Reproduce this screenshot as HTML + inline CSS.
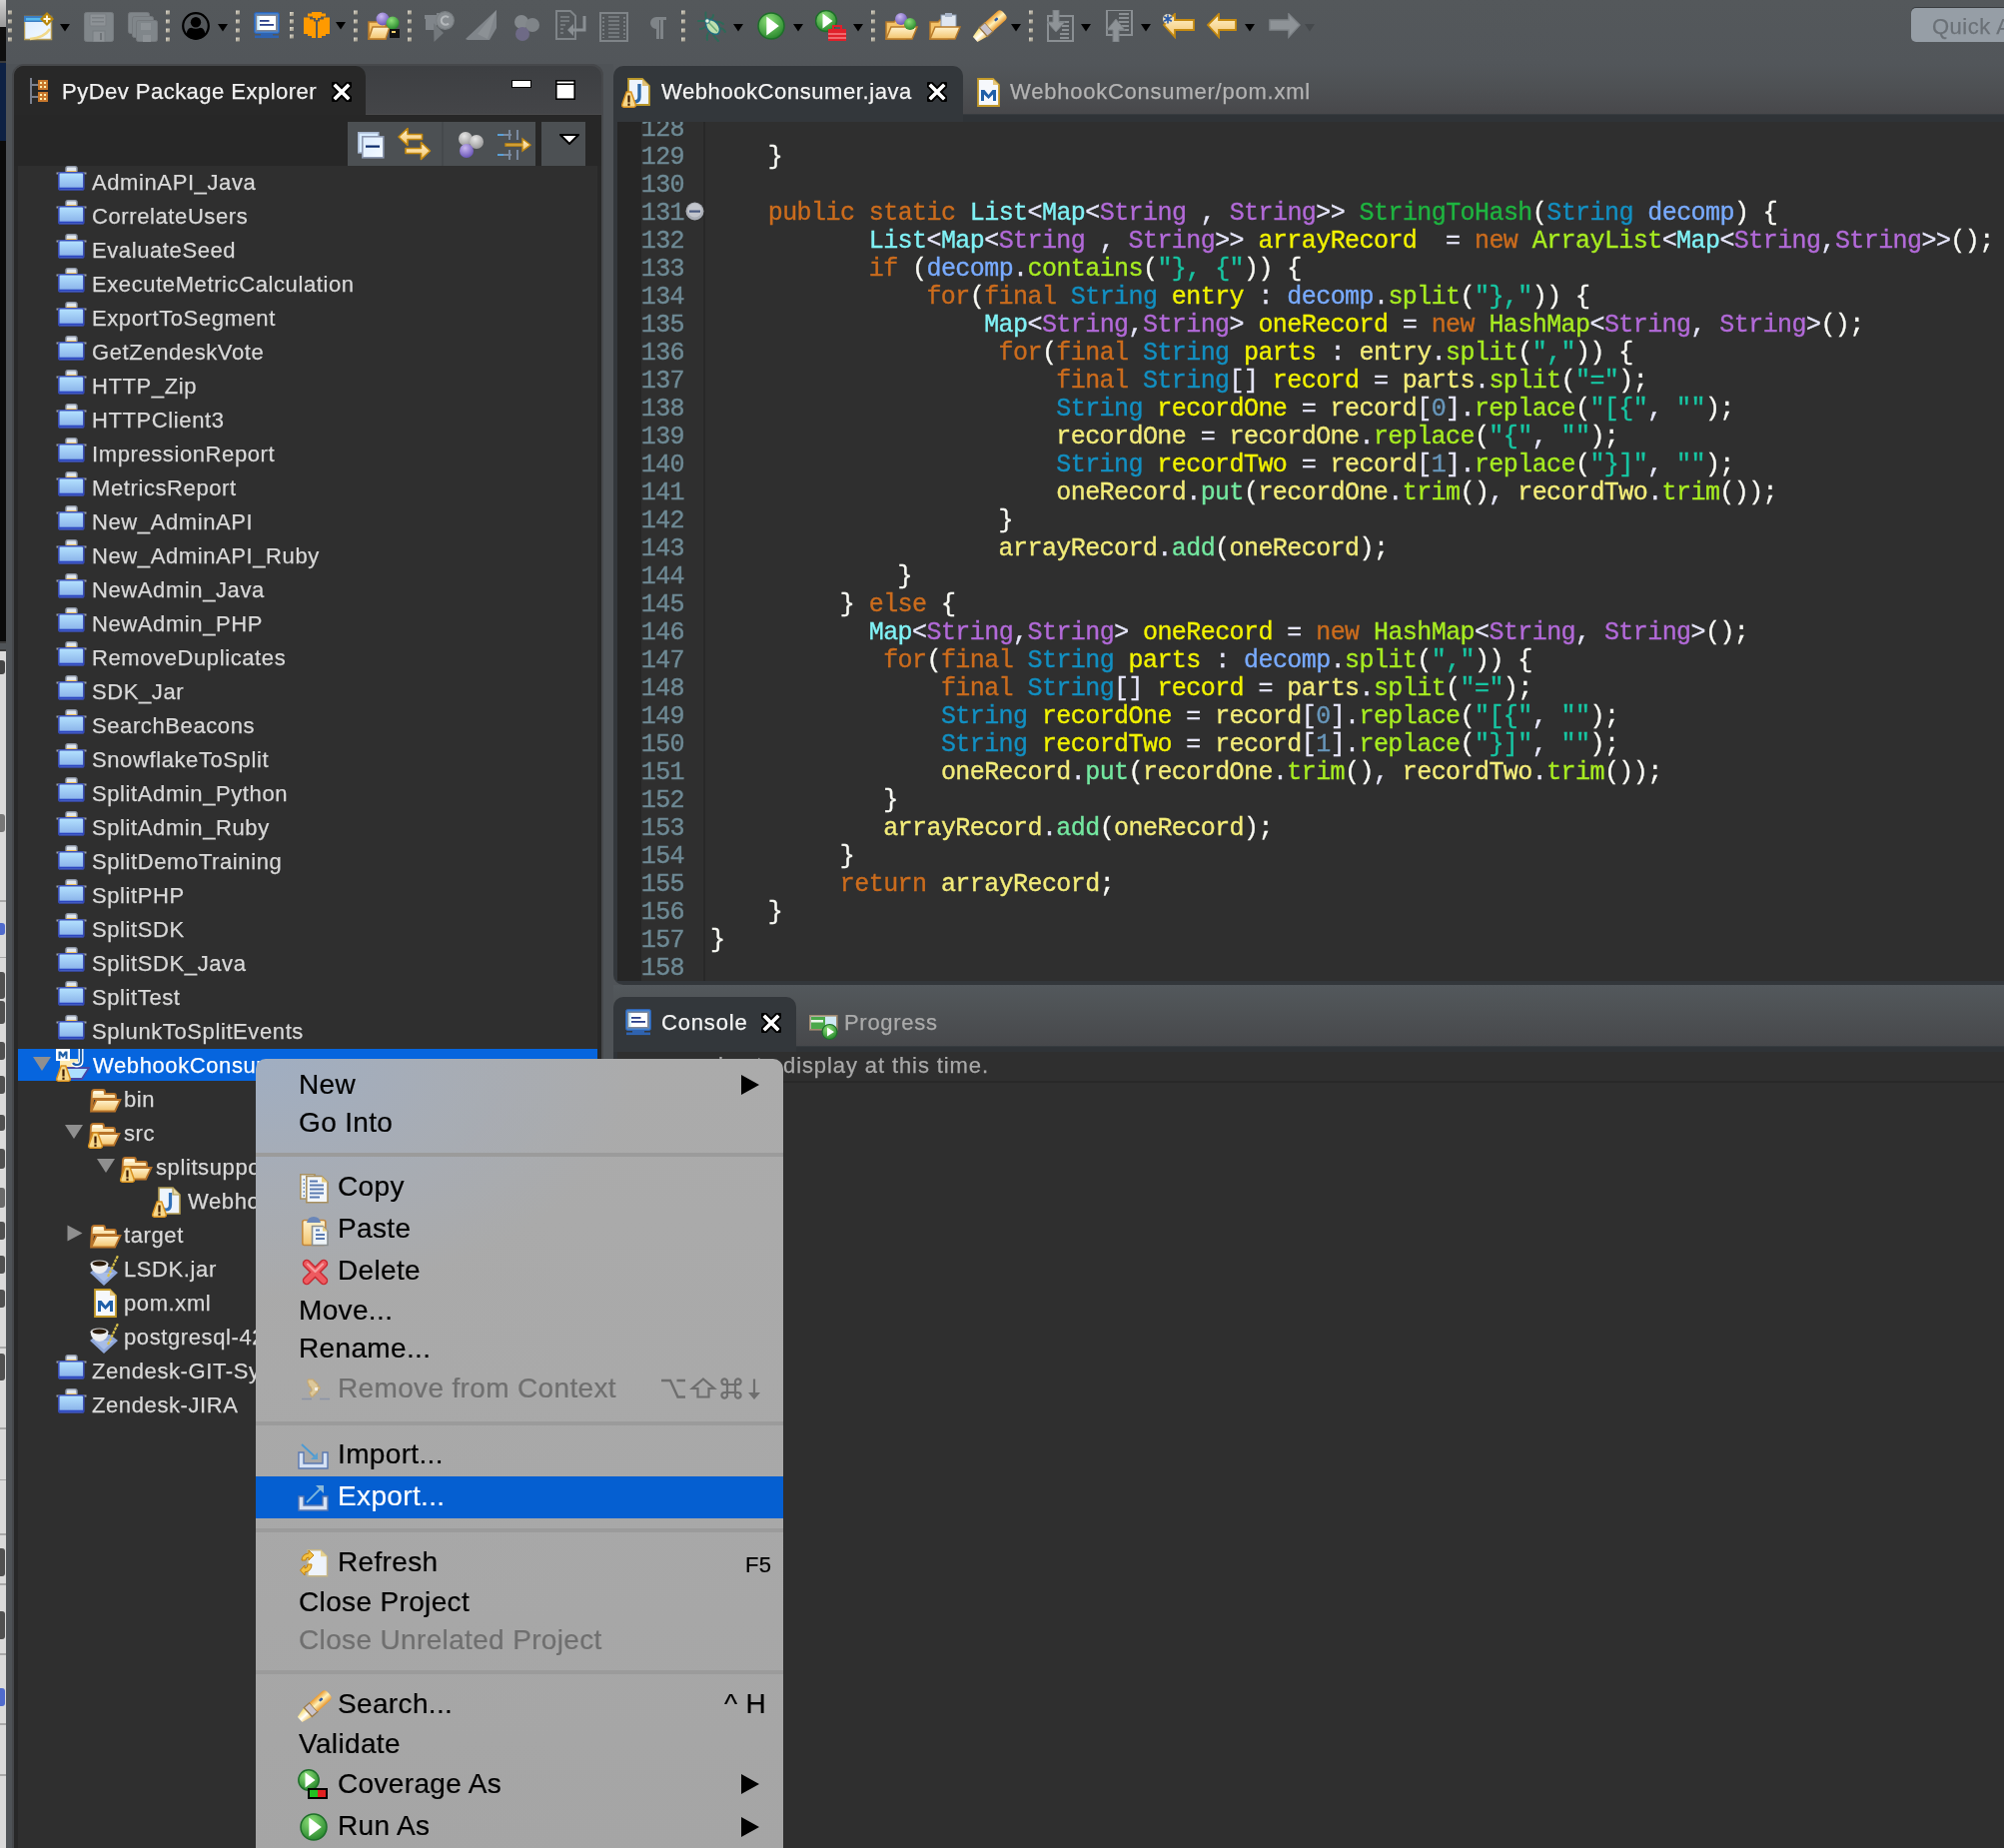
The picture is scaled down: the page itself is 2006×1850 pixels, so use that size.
<!DOCTYPE html><html><head><meta charset="utf-8"><style>
*{margin:0;padding:0;box-sizing:border-box}
html,body{width:2006px;height:1850px;overflow:hidden;background:#505458;position:relative;font-family:"Liberation Sans",sans-serif}
.a{position:absolute}
.t{position:absolute;white-space:pre;font-family:"Liberation Sans",sans-serif;-webkit-text-stroke:0.25px currentColor}
.code{position:absolute;white-space:pre;font-family:"Liberation Mono",monospace;font-size:25px;letter-spacing:-0.57px;line-height:28px;-webkit-text-stroke:0.35px currentColor}
.ln{position:absolute;white-space:pre;font-family:"Liberation Mono",monospace;font-size:25px;letter-spacing:-0.57px;line-height:28px;-webkit-text-stroke:0.35px currentColor;color:#6e8a95;text-align:right}
.kw{color:#cc6c1d}.cl{color:#1290c3}.if{color:#80f2f6}.ta{color:#b36ad9}.md{color:#1eb540}
.pa{color:#79abff}.lv{color:#f3ec79}.ld{color:#f2f200}.me{color:#a7ec21}.am{color:#74e8a0}
.st{color:#17c6a3}.nu{color:#6897bb}.op{color:#e6e6fa}.br{color:#f9faf4}
.tree .r{position:absolute;left:0;height:34px;line-height:34px;font-size:22px;color:#d9d9d9;white-space:pre;letter-spacing:0.3px}
.mi{position:absolute;white-space:pre;font-size:28px;color:#000;line-height:38px;letter-spacing:0.35px;-webkit-text-stroke:0.2px currentColor}
.dis{color:#6f6f6f}
.sep{position:absolute;left:0;width:528px;height:4px;background:#9b9b9b}
</style></head><body><div id="root" style="position:absolute;left:0;top:0;width:2006px;height:1850px;overflow:hidden;will-change:transform">
<div class="a" style="left:0;top:0;width:6px;height:27px;background:linear-gradient(#d0d0d0,#9a9a9a)"></div>
<div class="a" style="left:0;top:27px;width:6px;height:34px;background:#0f0f0f"></div>
<div class="a" style="left:0;top:61px;width:6px;height:2px;background:#3a3a3a"></div>
<div class="a" style="left:0;top:63px;width:6px;height:78px;background:#0d2144"></div>
<div class="a" style="left:0;top:141px;width:6px;height:501px;background:#0b0b0b"></div>
<div class="a" style="left:0;top:642px;width:6px;height:2px;background:#3c3c3c"></div>
<div class="a" style="left:0;top:650px;width:6px;height:2px;background:#3c3c3c"></div>
<div class="a" style="left:0;top:652px;width:6px;height:1198px;background:#dadada"></div>
<div class="a" style="left:0;top:661px;width:5px;height:14px;background:#111;opacity:0.75;border-radius:0 3px 3px 0"></div>
<div class="a" style="left:0;top:815px;width:5px;height:18px;background:#555;opacity:0.75;border-radius:0 3px 3px 0"></div>
<div class="a" style="left:0;top:924px;width:5px;height:12px;background:#2246c8;opacity:0.75;border-radius:0 3px 3px 0"></div>
<div class="a" style="left:0;top:973px;width:5px;height:27px;background:#222;opacity:0.75;border-radius:0 3px 3px 0"></div>
<div class="a" style="left:0;top:1002px;width:5px;height:23px;background:#222;opacity:0.75;border-radius:0 3px 3px 0"></div>
<div class="a" style="left:0;top:1043px;width:5px;height:18px;background:#222;opacity:0.75;border-radius:0 3px 3px 0"></div>
<div class="a" style="left:0;top:1077px;width:5px;height:18px;background:#222;opacity:0.75;border-radius:0 3px 3px 0"></div>
<div class="a" style="left:0;top:1116px;width:5px;height:16px;background:#222;opacity:0.75;border-radius:0 3px 3px 0"></div>
<div class="a" style="left:0;top:1150px;width:5px;height:20px;background:#222;opacity:0.75;border-radius:0 3px 3px 0"></div>
<div class="a" style="left:0;top:1189px;width:5px;height:20px;background:#444;opacity:0.75;border-radius:0 3px 3px 0"></div>
<div class="a" style="left:0;top:1223px;width:5px;height:18px;background:#222;opacity:0.75;border-radius:0 3px 3px 0"></div>
<div class="a" style="left:0;top:1257px;width:5px;height:18px;background:#222;opacity:0.75;border-radius:0 3px 3px 0"></div>
<div class="a" style="left:0;top:1291px;width:5px;height:18px;background:#222;opacity:0.75;border-radius:0 3px 3px 0"></div>
<div class="a" style="left:0;top:1355px;width:5px;height:27px;background:#222;opacity:0.75;border-radius:0 3px 3px 0"></div>
<div class="a" style="left:0;top:1550px;width:5px;height:28px;background:#222;opacity:0.75;border-radius:0 3px 3px 0"></div>
<div class="a" style="left:0;top:1613px;width:5px;height:28px;background:#222;opacity:0.75;border-radius:0 3px 3px 0"></div>
<div class="a" style="left:0;top:1690px;width:5px;height:18px;background:#2246c8;opacity:0.75;border-radius:0 3px 3px 0"></div>
<div class="a" style="left:0;top:901px;width:6px;height:1.5px;background:#a8a8a8"></div>
<div class="a" style="left:0;top:957.5px;width:6px;height:1.5px;background:#a8a8a8"></div>
<div class="a" style="left:0;top:1348px;width:6px;height:1.5px;background:#a8a8a8"></div>
<div class="a" style="left:0;top:1429px;width:6px;height:1.5px;background:#a8a8a8"></div>
<div class="a" style="left:0;top:1480.5px;width:6px;height:1.5px;background:#a8a8a8"></div>
<div class="a" style="left:0;top:1535px;width:6px;height:1.5px;background:#a8a8a8"></div>
<div class="a" style="left:0;top:1585px;width:6px;height:1.5px;background:#a8a8a8"></div>
<div class="a" style="left:0;top:1655px;width:6px;height:1.5px;background:#a8a8a8"></div>
<div class="a" style="left:0;top:1725px;width:6px;height:1.5px;background:#a8a8a8"></div>
<div class="a" style="left:0;top:1776px;width:6px;height:1.5px;background:#a8a8a8"></div>
<div class="a" style="left:6px;top:0;width:2000px;height:1850px;background:#4f5357"></div>
<div class="a" style="left:6px;top:0;width:2000px;height:64px;background:linear-gradient(#54585b,#52565a)"></div>
<div class="a" style="left:614px;top:64px;width:1392px;height:50px;background:linear-gradient(#52565a 0%,#4e5154 45%,#48484b 100%)"></div>
<svg width="0" height="0" style="position:absolute"><defs>
<linearGradient id="gdot" x1="0" y1="0" x2="1" y2="1"><stop offset="0" stop-color="#e4dfd2"/><stop offset="1" stop-color="#8f8a7c"/></linearGradient>
<linearGradient id="gfold" x1="0" y1="0" x2="0" y2="1"><stop offset="0" stop-color="#b5e3ff"/><stop offset="1" stop-color="#86aee8"/></linearGradient>
<linearGradient id="gorange" x1="0" y1="0" x2="0" y2="1"><stop offset="0" stop-color="#fff3cf"/><stop offset="1" stop-color="#f3c46d"/></linearGradient>
<radialGradient id="ggreen" cx="0.4" cy="0.3" r="0.7"><stop offset="0" stop-color="#8ee07a"/><stop offset="1" stop-color="#2a8a2e"/></radialGradient>
<radialGradient id="gpurple" cx="0.4" cy="0.3" r="0.7"><stop offset="0" stop-color="#c9b8f0"/><stop offset="1" stop-color="#6b57b8"/></radialGradient>
<radialGradient id="ggray" cx="0.4" cy="0.3" r="0.7"><stop offset="0" stop-color="#e6e6e6"/><stop offset="1" stop-color="#9a9a9a"/></radialGradient>
<linearGradient id="gpen" x1="0" y1="0" x2="0" y2="1"><stop offset="0" stop-color="#eb9a2c"/><stop offset="0.5" stop-color="#fff3bc"/><stop offset="1" stop-color="#e89830"/></linearGradient>
<linearGradient id="gpentip" x1="0" y1="0" x2="0" y2="1"><stop offset="0" stop-color="#f6d860"/><stop offset="0.55" stop-color="#ffffff"/><stop offset="1" stop-color="#f0c050"/></linearGradient>
<linearGradient id="gwin" x1="0" y1="0" x2="1" y2="1"><stop offset="0" stop-color="#dcecff"/><stop offset="1" stop-color="#f4faff"/></linearGradient>
</defs></svg>
<svg class="a" style="left:8px;top:10px" width="4" height="34" viewBox="0 0 4 34"><rect x="0" y="0.5" width="4" height="4" fill="url(#gdot)"/><rect x="0" y="9.5" width="4" height="4" fill="url(#gdot)"/><rect x="0" y="18.5" width="4" height="4" fill="url(#gdot)"/><rect x="0" y="27.5" width="4" height="4" fill="url(#gdot)"/></svg>
<svg class="a" style="left:166px;top:10px" width="4" height="34" viewBox="0 0 4 34"><rect x="0" y="0.5" width="4" height="4" fill="url(#gdot)"/><rect x="0" y="9.5" width="4" height="4" fill="url(#gdot)"/><rect x="0" y="18.5" width="4" height="4" fill="url(#gdot)"/><rect x="0" y="27.5" width="4" height="4" fill="url(#gdot)"/></svg>
<svg class="a" style="left:236px;top:10px" width="4" height="34" viewBox="0 0 4 34"><rect x="0" y="0.5" width="4" height="4" fill="url(#gdot)"/><rect x="0" y="9.5" width="4" height="4" fill="url(#gdot)"/><rect x="0" y="18.5" width="4" height="4" fill="url(#gdot)"/><rect x="0" y="27.5" width="4" height="4" fill="url(#gdot)"/></svg>
<svg class="a" style="left:354px;top:10px" width="4" height="34" viewBox="0 0 4 34"><rect x="0" y="0.5" width="4" height="4" fill="url(#gdot)"/><rect x="0" y="9.5" width="4" height="4" fill="url(#gdot)"/><rect x="0" y="18.5" width="4" height="4" fill="url(#gdot)"/><rect x="0" y="27.5" width="4" height="4" fill="url(#gdot)"/></svg>
<svg class="a" style="left:408px;top:10px" width="4" height="34" viewBox="0 0 4 34"><rect x="0" y="0.5" width="4" height="4" fill="url(#gdot)"/><rect x="0" y="9.5" width="4" height="4" fill="url(#gdot)"/><rect x="0" y="18.5" width="4" height="4" fill="url(#gdot)"/><rect x="0" y="27.5" width="4" height="4" fill="url(#gdot)"/></svg>
<svg class="a" style="left:682px;top:10px" width="4" height="34" viewBox="0 0 4 34"><rect x="0" y="0.5" width="4" height="4" fill="url(#gdot)"/><rect x="0" y="9.5" width="4" height="4" fill="url(#gdot)"/><rect x="0" y="18.5" width="4" height="4" fill="url(#gdot)"/><rect x="0" y="27.5" width="4" height="4" fill="url(#gdot)"/></svg>
<svg class="a" style="left:872px;top:10px" width="4" height="34" viewBox="0 0 4 34"><rect x="0" y="0.5" width="4" height="4" fill="url(#gdot)"/><rect x="0" y="9.5" width="4" height="4" fill="url(#gdot)"/><rect x="0" y="18.5" width="4" height="4" fill="url(#gdot)"/><rect x="0" y="27.5" width="4" height="4" fill="url(#gdot)"/></svg>
<svg class="a" style="left:1030px;top:10px" width="4" height="34" viewBox="0 0 4 34"><rect x="0" y="0.5" width="4" height="4" fill="url(#gdot)"/><rect x="0" y="9.5" width="4" height="4" fill="url(#gdot)"/><rect x="0" y="18.5" width="4" height="4" fill="url(#gdot)"/><rect x="0" y="27.5" width="4" height="4" fill="url(#gdot)"/></svg>
<svg class="a" style="left:290px;top:10px" width="4" height="34" viewBox="0 0 4 34"><rect x="0" y="2" width="4" height="4" fill="url(#gdot)"/><rect x="0" y="9.5" width="4" height="4" fill="url(#gdot)"/><rect x="0" y="17" width="4" height="4" fill="url(#gdot)"/><rect x="0" y="24.5" width="4" height="4" fill="url(#gdot)"/></svg>
<svg class="a" style="left:24px;top:12px" width="32" height="30" viewBox="0 0 32 30">
<rect x="0.5" y="4.5" width="27" height="23" fill="url(#gwin)" stroke="#b39a55" stroke-width="1.5"/>
<rect x="0" y="4" width="28" height="6" fill="#3c7fc4"/><rect x="2" y="6" width="22" height="2.5" fill="#57b8ec"/>
<path d="M6 27 Q20 26 26 17" stroke="#f1d98a" stroke-width="2.5" fill="none"/>
<path d="M23 7 L30 0 L37 7 L30 14Z" fill="#b8860b" transform="translate(-7,0)"/>
<path d="M23 3.5V10.5M19.5 7H26.5" stroke="#fff6dc" stroke-width="2"/></svg>
<svg class="a" style="left:60px;top:24px" width="10" height="8" viewBox="0 0 10 8"><path d="M0 0H10L5 7.5Z" fill="#000"/></svg>
<svg class="a" style="left:84px;top:12px" width="30" height="30" viewBox="0 0 30 30">
<rect x="0.5" y="0.5" width="29" height="29" rx="2" fill="#80868a" stroke="#767b7f"/>
<rect x="6" y="2" width="16" height="12" rx="1" fill="#8d9296" stroke="#7a7f83"/>
<rect x="8" y="5" width="12" height="1.5" fill="#7a7f83"/><rect x="8" y="9" width="12" height="1.5" fill="#7a7f83"/>
<rect x="9" y="19" width="12" height="11" fill="#8d9296" stroke="#777c80"/><rect x="16" y="21" width="2" height="7" fill="#6f7478"/></svg>
<svg class="a" style="left:128px;top:12px" width="30" height="30" viewBox="0 0 30 30"><rect x="0.5" y="0.5" width="21" height="21" rx="2" fill="#80868a" stroke="#75797d"/><rect x="4.5" y="4.5" width="21" height="21" rx="2" fill="#80868a" stroke="#75797d"/><rect x="8.5" y="8.5" width="21" height="21" rx="2" fill="#80868a" stroke="#75797d"/><rect x="13" y="11" width="10" height="7" fill="#8d9296"/><rect x="15" y="23" width="8" height="7" fill="#8d9296"/></svg>
<svg class="a" style="left:182px;top:12px" width="28" height="28" viewBox="0 0 28 28">
<circle cx="14" cy="14" r="12.8" fill="none" stroke="#000" stroke-width="2.2"/>
<circle cx="14" cy="10.3" r="5.2" fill="#000"/>
<path d="M4.6 23 Q5 16 9.5 15.8 Q14 17.5 18.5 15.8 Q23 16 23.4 23 Q19 27.5 14 27.5 Q9 27.5 4.6 23Z" fill="#000"/></svg>
<svg class="a" style="left:218px;top:24px" width="10" height="8" viewBox="0 0 10 8"><path d="M0 0H10L5 7.5Z" fill="#000"/></svg>
<svg class="a" style="left:254px;top:12px" width="26" height="27" viewBox="0 0 26 27">
<rect x="0.5" y="0.5" width="25" height="21" rx="2" fill="#3f7fd0" stroke="#2f63b0"/>
<rect x="2" y="2.5" width="22" height="17" fill="#7c8698"/>
<rect x="3.5" y="4" width="18.5" height="14" fill="#fff"/><rect x="3.5" y="4" width="2" height="14" fill="#cbeeff"/>
<rect x="6" y="8" width="9.5" height="1.8" fill="#2a3f8a"/><rect x="6" y="12" width="14" height="1.8" fill="#2a3f8a"/>
<rect x="7" y="22" width="12" height="2" fill="#2f63b0"/><rect x="1" y="23.5" width="24" height="2.6" fill="#2f63b0"/></svg>
<svg class="a" style="left:304px;top:12px" width="26" height="27" viewBox="0 0 26 27">
<path d="M8 0H18V1.5H22V4.5H17V6H14V8H12V6H9V4.5H4V1.5H8Z" fill="#ff9a00"/>
<path d="M0 5.5H6V7.5H10V9.5H12V26H8V24H4V22H0Z" fill="#ff9a00"/>
<path d="M26 5.5H20V7.5H16V9.5H14V26H18V24H22V22H26Z" fill="#ff9a00"/></svg>
<svg class="a" style="left:336px;top:22px" width="10" height="8" viewBox="0 0 10 8"><path d="M0 0H10L5 7.5Z" fill="#000"/></svg>
<svg class="a" style="left:368px;top:12px" width="34" height="30" viewBox="0 0 34 30">
<path d="M1 10H9L11 8H18V27H1Z" fill="#f4c36a" stroke="#b87b2a" stroke-width="1.5"/>
<path d="M1 27L5 15H22L18 27Z" fill="url(#gorange)" stroke="#b87b2a" stroke-width="1.5"/>
<circle cx="15" cy="7" r="6.5" fill="url(#gpurple)"/>
<circle cx="25" cy="11" r="6.5" fill="url(#ggreen)"/>
<rect x="22" y="17" width="10" height="9" fill="#111"/><rect x="24" y="19" width="4" height="2" fill="#f0d070"/></svg>
<svg class="a" style="left:424px;top:10px" width="32" height="34" viewBox="0 0 32 34">
<path d="M1 5H13V3H20V9H13V20H2V9H1Z" fill="#80858a"/>
<path d="M10 13L20 23L10.5 32Z" fill="#73787c"/>
<circle cx="21.5" cy="10.5" r="8.8" fill="#888d91" stroke="#7b8084" stroke-width="1.2"/>
<path d="M25 7.5A4.2 4.2 0 1 0 25 13.5" stroke="#b4b8bb" stroke-width="2.2" fill="none"/></svg>
<svg class="a" style="left:466px;top:10px" width="32" height="32" viewBox="0 0 32 32">
<path d="M31 0V18L24 30H2L0 29Z" fill="#80858a"/><path d="M31 0L12 24L22 29Z" fill="#8c9195"/></svg>
<svg class="a" style="left:514px;top:14px" width="28" height="28" viewBox="0 0 28 28">
<circle cx="8" cy="8" r="7" fill="#84898d"/><circle cx="19" cy="11" r="7" fill="#7f8488"/><circle cx="9" cy="20" r="7" fill="#6e6a86"/></svg>
<svg class="a" style="left:556px;top:10px" width="32" height="30" viewBox="0 0 32 30">
<path d="M1 1H15L20 6V29H1Z" fill="none" stroke="#7f8488" stroke-width="2"/>
<path d="M5 7H14M5 11H14M5 15H10M5 19H8M5 23H8" stroke="#7f8488" stroke-width="1.6"/>
<path d="M29 6V20H14" stroke="#8a8f93" stroke-width="3" fill="none"/><path d="M12 20L18 14V26Z" fill="#8a8f93"/></svg>
<svg class="a" style="left:600px;top:12px" width="29" height="30" viewBox="0 0 29 30">
<rect x="1" y="1" width="27" height="28" fill="none" stroke="#7f8488" stroke-width="2"/>
<path d="M9 5H20M9 9H20M9 13H20M9 17H20M9 21H20M9 25H20" stroke="#7f8488" stroke-width="1.6"/>
<path d="M4 5V26M25 5V26" stroke="#7f8488" stroke-width="1.6" stroke-dasharray="2 2"/></svg>
<svg class="a" style="left:650px;top:17px" width="17" height="22" viewBox="0 0 17 22"><path d="M7 0H17V3H14V22H11V3H10V22H7V12A6 6 0 0 1 7 0Z" fill="#7f8488"/></svg>
<svg class="a" style="left:698px;top:10px" width="30" height="32" viewBox="0 0 30 32">
<g stroke="#2c6a58" stroke-width="1.9" fill="none" stroke-linecap="round">
<path d="M9 10 Q8 6 8.5 2.5"/><path d="M13 9 Q16 8 16 5"/><path d="M8 11 H1"/><path d="M18 12 Q23 11 26 14"/>
<path d="M8 17 Q5 19 3 19"/><path d="M11 23 Q9 26 10 30"/><path d="M16 25 Q18 28 21 31"/><path d="M21 18 Q26 18 28 22"/>
</g>
<ellipse cx="15.5" cy="17" rx="6.3" ry="9.3" transform="rotate(-42 15.5 17)" fill="#1f6c80"/>
<ellipse cx="15.5" cy="17" rx="4.8" ry="7.6" transform="rotate(-42 15.5 17)" fill="#bfe0b0"/>
<path d="M11.5 12.5 L20 21.5" stroke="#6fae78" stroke-width="1.6"/>
<circle cx="10" cy="11" r="2.3" fill="#e8f4e0" stroke="#1f6c80" stroke-width="1"/></svg>
<svg class="a" style="left:734px;top:24px" width="10" height="8" viewBox="0 0 10 8"><path d="M0 0H10L5 7.5Z" fill="#000"/></svg>
<svg class="a" style="left:758px;top:12px" width="28" height="28" viewBox="0 0 28 28">
<circle cx="14" cy="14" r="13" fill="url(#ggreen)" stroke="#1e6e2a" stroke-width="1.5"/>
<path d="M9.3 4.6L21.8 14L9.3 23.6Z" fill="#fff"/></svg>
<svg class="a" style="left:794px;top:24px" width="10" height="8" viewBox="0 0 10 8"><path d="M0 0H10L5 7.5Z" fill="#000"/></svg>
<svg class="a" style="left:816px;top:10px" width="34" height="32" viewBox="0 0 34 32">
<circle cx="11" cy="11" r="10.5" fill="url(#ggreen)" stroke="#1e6e2a" stroke-width="1.5"/>
<path d="M7.5 3.5L17.5 11L7.5 18.5Z" fill="#fff"/>
<rect x="13" y="19" width="18" height="12" fill="#e0202a"/><rect x="18" y="16" width="8" height="4" fill="none" stroke="#e0202a" stroke-width="2"/>
<path d="M13 24H31M13 28H31" stroke="#ffb0b0" stroke-width="1"/></svg>
<svg class="a" style="left:854px;top:24px" width="10" height="8" viewBox="0 0 10 8"><path d="M0 0H10L5 7.5Z" fill="#000"/></svg>
<svg class="a" style="left:886px;top:12px" width="34" height="30" viewBox="0 0 34 30">
<path d="M1 10H9L11 8H20V27H1Z" fill="#f4c36a" stroke="#b87b2a" stroke-width="1.5"/>
<path d="M1 27L6 15H32L27 27Z" fill="url(#gorange)" stroke="#b87b2a" stroke-width="1.5"/>
<circle cx="16" cy="7" r="6" fill="url(#gpurple)"/>
<circle cx="25" cy="12" r="6" fill="url(#ggreen)"/></svg>
<svg class="a" style="left:930px;top:12px" width="32" height="30" viewBox="0 0 32 30">
<path d="M1 10H9L11 8H18V27H1Z" fill="#f4c36a" stroke="#b87b2a" stroke-width="1.5"/>
<rect x="12" y="3" width="15" height="13" fill="#dfe6f0" stroke="#8a9ab0"/><rect x="16" y="1" width="7" height="4" fill="#a8b4c8"/>
<path d="M1 27L6 15H31L26 27Z" fill="url(#gorange)" stroke="#b87b2a" stroke-width="1.5"/></svg>
<svg class="a" style="left:974px;top:10px" width="34" height="32" viewBox="0 0 34 32"><g transform="translate(17 16) rotate(-42)">
<path d="M-20 -3.5 L-9 -6 V6 L-20 3.5Z" fill="url(#gpentip)"/>
<rect x="-9" y="-6" width="7.5" height="12" fill="#c9c3cc" stroke="#9b7a48" stroke-width="1.3"/>
<path d="M-1.5 -6 H15 Q19 -6 19 -2 V2 Q19 6 15 6 H-1.5Z" fill="url(#gpen)"/>
<rect x="7" y="-2" width="4" height="2.6" rx="1" fill="#2a5aa8"/>
</g></svg>
<svg class="a" style="left:1012px;top:24px" width="10" height="8" viewBox="0 0 10 8"><path d="M0 0H10L5 7.5Z" fill="#000"/></svg>
<svg class="a" style="left:1046px;top:10px" width="30" height="32" viewBox="0 0 30 32">
<rect x="3" y="6" width="25" height="25" fill="none" stroke="#8a8f93" stroke-width="2"/>
<path d="M13 12H24M17 16H24M17 20H24M15 24H24M15 28H24" stroke="#8a8f93" stroke-width="1.8"/>
<path d="M8 0H14V12H20L11 22L2 12H8Z" fill="#8e9397" stroke="#777c80"/></svg>
<svg class="a" style="left:1082px;top:24px" width="10" height="8" viewBox="0 0 10 8"><path d="M0 0H10L5 7.5Z" fill="#000"/></svg>
<svg class="a" style="left:1106px;top:10px" width="30" height="32" viewBox="0 0 30 32">
<rect x="2" y="0" width="25" height="25" fill="none" stroke="#8a8f93" stroke-width="2"/>
<path d="M14 4H24M14 8H24M14 12H24M14 16H24M14 20H24" stroke="#8a8f93" stroke-width="1.8"/>
<path d="M8 32H14V20H20L11 9L2 20H8Z" fill="#8e9397" stroke="#777c80"/></svg>
<svg class="a" style="left:1142px;top:24px" width="10" height="8" viewBox="0 0 10 8"><path d="M0 0H10L5 7.5Z" fill="#000"/></svg>
<svg class="a" style="left:1164px;top:13px" width="34" height="26" viewBox="0 0 34 26">
<path d="M1 12L12 1V7H31V17H12V24Z" fill="url(#gorange)" stroke="#c58a10" stroke-width="1.8"/>
<circle cx="5" cy="6" r="5" fill="#e8dcc0"/>
<path d="M5 1.5V10.5M1.2 3.8L8.8 8.2M1.2 8.2L8.8 3.8" stroke="#2a5aa8" stroke-width="1.6"/></svg>
<svg class="a" style="left:1208px;top:13px" width="32" height="26" viewBox="0 0 32 26">
<path d="M1 12L12 1V7H29V17H12V24Z" fill="url(#gorange)" stroke="#c58a10" stroke-width="1.8"/></svg>
<svg class="a" style="left:1246px;top:24px" width="10" height="8" viewBox="0 0 10 8"><path d="M0 0H10L5 7.5Z" fill="#000"/></svg>
<svg class="a" style="left:1270px;top:13px" width="32" height="26" viewBox="0 0 32 26">
<path d="M31 12L20 1V7H1V17H20V24Z" fill="#8e9397" stroke="#7e8387" stroke-width="1.5"/></svg>
<svg class="a" style="left:1306px;top:24px" width="10" height="8" viewBox="0 0 10 8"><path d="M0 0H10L5 7.5Z" fill="#45494c"/></svg>
<div class="a" style="left:1913px;top:8px;width:100px;height:34px;border-radius:5px;background:#969ea6;box-shadow:0 -1px 0 #3a3d40"></div>
<div class="t" style="left:1934px;top:11.5px;font-size:22px;line-height:30px;color:#6b7177;letter-spacing:0.5px">Quick Access</div>
<div class="a" style="left:12px;top:64px;width:592px;height:1786px;background:#282828;border-radius:12px 12px 0 0;border:2px solid #46484b;border-bottom:none"></div>
<div class="a" style="left:300px;top:64px;width:304px;height:51px;background:linear-gradient(#3d3f42,#444548);border-radius:0 12px 0 0;border-top:2px solid #46484b;border-right:2px solid #46484b;border-bottom:1.5px solid #4b4b4c"></div>
<div class="a" style="left:14px;top:66px;width:352px;height:50px;background:#282828;border-radius:10px 10px 0 0"></div>
<div class="t" style="left:62px;top:75px;font-size:22px;line-height:34px;color:#f2f2f2;letter-spacing:0.48px">PyDev Package Explorer</div>
<div class="a" style="left:14px;top:115px;width:588px;height:51px;background:#272727"></div>
<div class="a" style="left:348px;top:122px;width:188px;height:44px;background:#4c5053"></div>
<div class="a" style="left:442px;top:122px;width:2px;height:44px;background:#45494c"></div>
<div class="a" style="left:542px;top:122px;width:44px;height:44px;background:#4c5053"></div>
<div class="a" style="left:18px;top:166px;width:580px;height:1684px;background:#2f2f2f"></div>
<div class="tree"><div class="t" style="left:92px;top:166.4px;font-size:22px;line-height:34px;color:#d9d9d9;letter-spacing:0.6px">AdminAPI_Java</div>
<svg class="a" style="left:56px;top:166px" width="31" height="25" viewBox="0 0 31 25">
<rect x="10" y="0.8" width="11" height="6" rx="2" fill="#dfe6ee" stroke="#8d96a6" stroke-width="1.5"/>
<rect x="10.5" y="5" width="10" height="2.5" fill="#f2c35c"/>
<path d="M0.5 6.5H30.5V8.5H28.5V7.5H2.5V8.5H0.5Z" fill="#9aa1ad"/>
<rect x="2.8" y="6.8" width="25" height="17.2" rx="1.8" fill="url(#gfold)" stroke="#3b4fb5" stroke-width="1.6"/>
<path d="M3 22.5H28" stroke="#2a44c0" stroke-width="1.6"/></svg>
<div class="t" style="left:92px;top:200.4px;font-size:22px;line-height:34px;color:#d9d9d9;letter-spacing:0.6px">CorrelateUsers</div>
<svg class="a" style="left:56px;top:200px" width="31" height="25" viewBox="0 0 31 25">
<rect x="10" y="0.8" width="11" height="6" rx="2" fill="#dfe6ee" stroke="#8d96a6" stroke-width="1.5"/>
<rect x="10.5" y="5" width="10" height="2.5" fill="#f2c35c"/>
<path d="M0.5 6.5H30.5V8.5H28.5V7.5H2.5V8.5H0.5Z" fill="#9aa1ad"/>
<rect x="2.8" y="6.8" width="25" height="17.2" rx="1.8" fill="url(#gfold)" stroke="#3b4fb5" stroke-width="1.6"/>
<path d="M3 22.5H28" stroke="#2a44c0" stroke-width="1.6"/></svg>
<div class="t" style="left:92px;top:234.4px;font-size:22px;line-height:34px;color:#d9d9d9;letter-spacing:0.6px">EvaluateSeed</div>
<svg class="a" style="left:56px;top:234px" width="31" height="25" viewBox="0 0 31 25">
<rect x="10" y="0.8" width="11" height="6" rx="2" fill="#dfe6ee" stroke="#8d96a6" stroke-width="1.5"/>
<rect x="10.5" y="5" width="10" height="2.5" fill="#f2c35c"/>
<path d="M0.5 6.5H30.5V8.5H28.5V7.5H2.5V8.5H0.5Z" fill="#9aa1ad"/>
<rect x="2.8" y="6.8" width="25" height="17.2" rx="1.8" fill="url(#gfold)" stroke="#3b4fb5" stroke-width="1.6"/>
<path d="M3 22.5H28" stroke="#2a44c0" stroke-width="1.6"/></svg>
<div class="t" style="left:92px;top:268.4px;font-size:22px;line-height:34px;color:#d9d9d9;letter-spacing:0.6px">ExecuteMetricCalculation</div>
<svg class="a" style="left:56px;top:268px" width="31" height="25" viewBox="0 0 31 25">
<rect x="10" y="0.8" width="11" height="6" rx="2" fill="#dfe6ee" stroke="#8d96a6" stroke-width="1.5"/>
<rect x="10.5" y="5" width="10" height="2.5" fill="#f2c35c"/>
<path d="M0.5 6.5H30.5V8.5H28.5V7.5H2.5V8.5H0.5Z" fill="#9aa1ad"/>
<rect x="2.8" y="6.8" width="25" height="17.2" rx="1.8" fill="url(#gfold)" stroke="#3b4fb5" stroke-width="1.6"/>
<path d="M3 22.5H28" stroke="#2a44c0" stroke-width="1.6"/></svg>
<div class="t" style="left:92px;top:302.4px;font-size:22px;line-height:34px;color:#d9d9d9;letter-spacing:0.6px">ExportToSegment</div>
<svg class="a" style="left:56px;top:302px" width="31" height="25" viewBox="0 0 31 25">
<rect x="10" y="0.8" width="11" height="6" rx="2" fill="#dfe6ee" stroke="#8d96a6" stroke-width="1.5"/>
<rect x="10.5" y="5" width="10" height="2.5" fill="#f2c35c"/>
<path d="M0.5 6.5H30.5V8.5H28.5V7.5H2.5V8.5H0.5Z" fill="#9aa1ad"/>
<rect x="2.8" y="6.8" width="25" height="17.2" rx="1.8" fill="url(#gfold)" stroke="#3b4fb5" stroke-width="1.6"/>
<path d="M3 22.5H28" stroke="#2a44c0" stroke-width="1.6"/></svg>
<div class="t" style="left:92px;top:336.4px;font-size:22px;line-height:34px;color:#d9d9d9;letter-spacing:0.6px">GetZendeskVote</div>
<svg class="a" style="left:56px;top:336px" width="31" height="25" viewBox="0 0 31 25">
<rect x="10" y="0.8" width="11" height="6" rx="2" fill="#dfe6ee" stroke="#8d96a6" stroke-width="1.5"/>
<rect x="10.5" y="5" width="10" height="2.5" fill="#f2c35c"/>
<path d="M0.5 6.5H30.5V8.5H28.5V7.5H2.5V8.5H0.5Z" fill="#9aa1ad"/>
<rect x="2.8" y="6.8" width="25" height="17.2" rx="1.8" fill="url(#gfold)" stroke="#3b4fb5" stroke-width="1.6"/>
<path d="M3 22.5H28" stroke="#2a44c0" stroke-width="1.6"/></svg>
<div class="t" style="left:92px;top:370.4px;font-size:22px;line-height:34px;color:#d9d9d9;letter-spacing:0.6px">HTTP_Zip</div>
<svg class="a" style="left:56px;top:370px" width="31" height="25" viewBox="0 0 31 25">
<rect x="10" y="0.8" width="11" height="6" rx="2" fill="#dfe6ee" stroke="#8d96a6" stroke-width="1.5"/>
<rect x="10.5" y="5" width="10" height="2.5" fill="#f2c35c"/>
<path d="M0.5 6.5H30.5V8.5H28.5V7.5H2.5V8.5H0.5Z" fill="#9aa1ad"/>
<rect x="2.8" y="6.8" width="25" height="17.2" rx="1.8" fill="url(#gfold)" stroke="#3b4fb5" stroke-width="1.6"/>
<path d="M3 22.5H28" stroke="#2a44c0" stroke-width="1.6"/></svg>
<div class="t" style="left:92px;top:404.4px;font-size:22px;line-height:34px;color:#d9d9d9;letter-spacing:0.6px">HTTPClient3</div>
<svg class="a" style="left:56px;top:404px" width="31" height="25" viewBox="0 0 31 25">
<rect x="10" y="0.8" width="11" height="6" rx="2" fill="#dfe6ee" stroke="#8d96a6" stroke-width="1.5"/>
<rect x="10.5" y="5" width="10" height="2.5" fill="#f2c35c"/>
<path d="M0.5 6.5H30.5V8.5H28.5V7.5H2.5V8.5H0.5Z" fill="#9aa1ad"/>
<rect x="2.8" y="6.8" width="25" height="17.2" rx="1.8" fill="url(#gfold)" stroke="#3b4fb5" stroke-width="1.6"/>
<path d="M3 22.5H28" stroke="#2a44c0" stroke-width="1.6"/></svg>
<div class="t" style="left:92px;top:438.4px;font-size:22px;line-height:34px;color:#d9d9d9;letter-spacing:0.6px">ImpressionReport</div>
<svg class="a" style="left:56px;top:438px" width="31" height="25" viewBox="0 0 31 25">
<rect x="10" y="0.8" width="11" height="6" rx="2" fill="#dfe6ee" stroke="#8d96a6" stroke-width="1.5"/>
<rect x="10.5" y="5" width="10" height="2.5" fill="#f2c35c"/>
<path d="M0.5 6.5H30.5V8.5H28.5V7.5H2.5V8.5H0.5Z" fill="#9aa1ad"/>
<rect x="2.8" y="6.8" width="25" height="17.2" rx="1.8" fill="url(#gfold)" stroke="#3b4fb5" stroke-width="1.6"/>
<path d="M3 22.5H28" stroke="#2a44c0" stroke-width="1.6"/></svg>
<div class="t" style="left:92px;top:472.4px;font-size:22px;line-height:34px;color:#d9d9d9;letter-spacing:0.6px">MetricsReport</div>
<svg class="a" style="left:56px;top:472px" width="31" height="25" viewBox="0 0 31 25">
<rect x="10" y="0.8" width="11" height="6" rx="2" fill="#dfe6ee" stroke="#8d96a6" stroke-width="1.5"/>
<rect x="10.5" y="5" width="10" height="2.5" fill="#f2c35c"/>
<path d="M0.5 6.5H30.5V8.5H28.5V7.5H2.5V8.5H0.5Z" fill="#9aa1ad"/>
<rect x="2.8" y="6.8" width="25" height="17.2" rx="1.8" fill="url(#gfold)" stroke="#3b4fb5" stroke-width="1.6"/>
<path d="M3 22.5H28" stroke="#2a44c0" stroke-width="1.6"/></svg>
<div class="t" style="left:92px;top:506.4px;font-size:22px;line-height:34px;color:#d9d9d9;letter-spacing:0.6px">New_AdminAPI</div>
<svg class="a" style="left:56px;top:506px" width="31" height="25" viewBox="0 0 31 25">
<rect x="10" y="0.8" width="11" height="6" rx="2" fill="#dfe6ee" stroke="#8d96a6" stroke-width="1.5"/>
<rect x="10.5" y="5" width="10" height="2.5" fill="#f2c35c"/>
<path d="M0.5 6.5H30.5V8.5H28.5V7.5H2.5V8.5H0.5Z" fill="#9aa1ad"/>
<rect x="2.8" y="6.8" width="25" height="17.2" rx="1.8" fill="url(#gfold)" stroke="#3b4fb5" stroke-width="1.6"/>
<path d="M3 22.5H28" stroke="#2a44c0" stroke-width="1.6"/></svg>
<div class="t" style="left:92px;top:540.4px;font-size:22px;line-height:34px;color:#d9d9d9;letter-spacing:0.6px">New_AdminAPI_Ruby</div>
<svg class="a" style="left:56px;top:540px" width="31" height="25" viewBox="0 0 31 25">
<rect x="10" y="0.8" width="11" height="6" rx="2" fill="#dfe6ee" stroke="#8d96a6" stroke-width="1.5"/>
<rect x="10.5" y="5" width="10" height="2.5" fill="#f2c35c"/>
<path d="M0.5 6.5H30.5V8.5H28.5V7.5H2.5V8.5H0.5Z" fill="#9aa1ad"/>
<rect x="2.8" y="6.8" width="25" height="17.2" rx="1.8" fill="url(#gfold)" stroke="#3b4fb5" stroke-width="1.6"/>
<path d="M3 22.5H28" stroke="#2a44c0" stroke-width="1.6"/></svg>
<div class="t" style="left:92px;top:574.4px;font-size:22px;line-height:34px;color:#d9d9d9;letter-spacing:0.6px">NewAdmin_Java</div>
<svg class="a" style="left:56px;top:574px" width="31" height="25" viewBox="0 0 31 25">
<rect x="10" y="0.8" width="11" height="6" rx="2" fill="#dfe6ee" stroke="#8d96a6" stroke-width="1.5"/>
<rect x="10.5" y="5" width="10" height="2.5" fill="#f2c35c"/>
<path d="M0.5 6.5H30.5V8.5H28.5V7.5H2.5V8.5H0.5Z" fill="#9aa1ad"/>
<rect x="2.8" y="6.8" width="25" height="17.2" rx="1.8" fill="url(#gfold)" stroke="#3b4fb5" stroke-width="1.6"/>
<path d="M3 22.5H28" stroke="#2a44c0" stroke-width="1.6"/></svg>
<div class="t" style="left:92px;top:608.4px;font-size:22px;line-height:34px;color:#d9d9d9;letter-spacing:0.6px">NewAdmin_PHP</div>
<svg class="a" style="left:56px;top:608px" width="31" height="25" viewBox="0 0 31 25">
<rect x="10" y="0.8" width="11" height="6" rx="2" fill="#dfe6ee" stroke="#8d96a6" stroke-width="1.5"/>
<rect x="10.5" y="5" width="10" height="2.5" fill="#f2c35c"/>
<path d="M0.5 6.5H30.5V8.5H28.5V7.5H2.5V8.5H0.5Z" fill="#9aa1ad"/>
<rect x="2.8" y="6.8" width="25" height="17.2" rx="1.8" fill="url(#gfold)" stroke="#3b4fb5" stroke-width="1.6"/>
<path d="M3 22.5H28" stroke="#2a44c0" stroke-width="1.6"/></svg>
<div class="t" style="left:92px;top:642.4px;font-size:22px;line-height:34px;color:#d9d9d9;letter-spacing:0.6px">RemoveDuplicates</div>
<svg class="a" style="left:56px;top:642px" width="31" height="25" viewBox="0 0 31 25">
<rect x="10" y="0.8" width="11" height="6" rx="2" fill="#dfe6ee" stroke="#8d96a6" stroke-width="1.5"/>
<rect x="10.5" y="5" width="10" height="2.5" fill="#f2c35c"/>
<path d="M0.5 6.5H30.5V8.5H28.5V7.5H2.5V8.5H0.5Z" fill="#9aa1ad"/>
<rect x="2.8" y="6.8" width="25" height="17.2" rx="1.8" fill="url(#gfold)" stroke="#3b4fb5" stroke-width="1.6"/>
<path d="M3 22.5H28" stroke="#2a44c0" stroke-width="1.6"/></svg>
<div class="t" style="left:92px;top:676.4px;font-size:22px;line-height:34px;color:#d9d9d9;letter-spacing:0.6px">SDK_Jar</div>
<svg class="a" style="left:56px;top:676px" width="31" height="25" viewBox="0 0 31 25">
<rect x="10" y="0.8" width="11" height="6" rx="2" fill="#dfe6ee" stroke="#8d96a6" stroke-width="1.5"/>
<rect x="10.5" y="5" width="10" height="2.5" fill="#f2c35c"/>
<path d="M0.5 6.5H30.5V8.5H28.5V7.5H2.5V8.5H0.5Z" fill="#9aa1ad"/>
<rect x="2.8" y="6.8" width="25" height="17.2" rx="1.8" fill="url(#gfold)" stroke="#3b4fb5" stroke-width="1.6"/>
<path d="M3 22.5H28" stroke="#2a44c0" stroke-width="1.6"/></svg>
<div class="t" style="left:92px;top:710.4px;font-size:22px;line-height:34px;color:#d9d9d9;letter-spacing:0.6px">SearchBeacons</div>
<svg class="a" style="left:56px;top:710px" width="31" height="25" viewBox="0 0 31 25">
<rect x="10" y="0.8" width="11" height="6" rx="2" fill="#dfe6ee" stroke="#8d96a6" stroke-width="1.5"/>
<rect x="10.5" y="5" width="10" height="2.5" fill="#f2c35c"/>
<path d="M0.5 6.5H30.5V8.5H28.5V7.5H2.5V8.5H0.5Z" fill="#9aa1ad"/>
<rect x="2.8" y="6.8" width="25" height="17.2" rx="1.8" fill="url(#gfold)" stroke="#3b4fb5" stroke-width="1.6"/>
<path d="M3 22.5H28" stroke="#2a44c0" stroke-width="1.6"/></svg>
<div class="t" style="left:92px;top:744.4px;font-size:22px;line-height:34px;color:#d9d9d9;letter-spacing:0.6px">SnowflakeToSplit</div>
<svg class="a" style="left:56px;top:744px" width="31" height="25" viewBox="0 0 31 25">
<rect x="10" y="0.8" width="11" height="6" rx="2" fill="#dfe6ee" stroke="#8d96a6" stroke-width="1.5"/>
<rect x="10.5" y="5" width="10" height="2.5" fill="#f2c35c"/>
<path d="M0.5 6.5H30.5V8.5H28.5V7.5H2.5V8.5H0.5Z" fill="#9aa1ad"/>
<rect x="2.8" y="6.8" width="25" height="17.2" rx="1.8" fill="url(#gfold)" stroke="#3b4fb5" stroke-width="1.6"/>
<path d="M3 22.5H28" stroke="#2a44c0" stroke-width="1.6"/></svg>
<div class="t" style="left:92px;top:778.4px;font-size:22px;line-height:34px;color:#d9d9d9;letter-spacing:0.6px">SplitAdmin_Python</div>
<svg class="a" style="left:56px;top:778px" width="31" height="25" viewBox="0 0 31 25">
<rect x="10" y="0.8" width="11" height="6" rx="2" fill="#dfe6ee" stroke="#8d96a6" stroke-width="1.5"/>
<rect x="10.5" y="5" width="10" height="2.5" fill="#f2c35c"/>
<path d="M0.5 6.5H30.5V8.5H28.5V7.5H2.5V8.5H0.5Z" fill="#9aa1ad"/>
<rect x="2.8" y="6.8" width="25" height="17.2" rx="1.8" fill="url(#gfold)" stroke="#3b4fb5" stroke-width="1.6"/>
<path d="M3 22.5H28" stroke="#2a44c0" stroke-width="1.6"/></svg>
<div class="t" style="left:92px;top:812.4px;font-size:22px;line-height:34px;color:#d9d9d9;letter-spacing:0.6px">SplitAdmin_Ruby</div>
<svg class="a" style="left:56px;top:812px" width="31" height="25" viewBox="0 0 31 25">
<rect x="10" y="0.8" width="11" height="6" rx="2" fill="#dfe6ee" stroke="#8d96a6" stroke-width="1.5"/>
<rect x="10.5" y="5" width="10" height="2.5" fill="#f2c35c"/>
<path d="M0.5 6.5H30.5V8.5H28.5V7.5H2.5V8.5H0.5Z" fill="#9aa1ad"/>
<rect x="2.8" y="6.8" width="25" height="17.2" rx="1.8" fill="url(#gfold)" stroke="#3b4fb5" stroke-width="1.6"/>
<path d="M3 22.5H28" stroke="#2a44c0" stroke-width="1.6"/></svg>
<div class="t" style="left:92px;top:846.4px;font-size:22px;line-height:34px;color:#d9d9d9;letter-spacing:0.6px">SplitDemoTraining</div>
<svg class="a" style="left:56px;top:846px" width="31" height="25" viewBox="0 0 31 25">
<rect x="10" y="0.8" width="11" height="6" rx="2" fill="#dfe6ee" stroke="#8d96a6" stroke-width="1.5"/>
<rect x="10.5" y="5" width="10" height="2.5" fill="#f2c35c"/>
<path d="M0.5 6.5H30.5V8.5H28.5V7.5H2.5V8.5H0.5Z" fill="#9aa1ad"/>
<rect x="2.8" y="6.8" width="25" height="17.2" rx="1.8" fill="url(#gfold)" stroke="#3b4fb5" stroke-width="1.6"/>
<path d="M3 22.5H28" stroke="#2a44c0" stroke-width="1.6"/></svg>
<div class="t" style="left:92px;top:880.4px;font-size:22px;line-height:34px;color:#d9d9d9;letter-spacing:0.6px">SplitPHP</div>
<svg class="a" style="left:56px;top:880px" width="31" height="25" viewBox="0 0 31 25">
<rect x="10" y="0.8" width="11" height="6" rx="2" fill="#dfe6ee" stroke="#8d96a6" stroke-width="1.5"/>
<rect x="10.5" y="5" width="10" height="2.5" fill="#f2c35c"/>
<path d="M0.5 6.5H30.5V8.5H28.5V7.5H2.5V8.5H0.5Z" fill="#9aa1ad"/>
<rect x="2.8" y="6.8" width="25" height="17.2" rx="1.8" fill="url(#gfold)" stroke="#3b4fb5" stroke-width="1.6"/>
<path d="M3 22.5H28" stroke="#2a44c0" stroke-width="1.6"/></svg>
<div class="t" style="left:92px;top:914.4px;font-size:22px;line-height:34px;color:#d9d9d9;letter-spacing:0.6px">SplitSDK</div>
<svg class="a" style="left:56px;top:914px" width="31" height="25" viewBox="0 0 31 25">
<rect x="10" y="0.8" width="11" height="6" rx="2" fill="#dfe6ee" stroke="#8d96a6" stroke-width="1.5"/>
<rect x="10.5" y="5" width="10" height="2.5" fill="#f2c35c"/>
<path d="M0.5 6.5H30.5V8.5H28.5V7.5H2.5V8.5H0.5Z" fill="#9aa1ad"/>
<rect x="2.8" y="6.8" width="25" height="17.2" rx="1.8" fill="url(#gfold)" stroke="#3b4fb5" stroke-width="1.6"/>
<path d="M3 22.5H28" stroke="#2a44c0" stroke-width="1.6"/></svg>
<div class="t" style="left:92px;top:948.4px;font-size:22px;line-height:34px;color:#d9d9d9;letter-spacing:0.6px">SplitSDK_Java</div>
<svg class="a" style="left:56px;top:948px" width="31" height="25" viewBox="0 0 31 25">
<rect x="10" y="0.8" width="11" height="6" rx="2" fill="#dfe6ee" stroke="#8d96a6" stroke-width="1.5"/>
<rect x="10.5" y="5" width="10" height="2.5" fill="#f2c35c"/>
<path d="M0.5 6.5H30.5V8.5H28.5V7.5H2.5V8.5H0.5Z" fill="#9aa1ad"/>
<rect x="2.8" y="6.8" width="25" height="17.2" rx="1.8" fill="url(#gfold)" stroke="#3b4fb5" stroke-width="1.6"/>
<path d="M3 22.5H28" stroke="#2a44c0" stroke-width="1.6"/></svg>
<div class="t" style="left:92px;top:982.4px;font-size:22px;line-height:34px;color:#d9d9d9;letter-spacing:0.6px">SplitTest</div>
<svg class="a" style="left:56px;top:982px" width="31" height="25" viewBox="0 0 31 25">
<rect x="10" y="0.8" width="11" height="6" rx="2" fill="#dfe6ee" stroke="#8d96a6" stroke-width="1.5"/>
<rect x="10.5" y="5" width="10" height="2.5" fill="#f2c35c"/>
<path d="M0.5 6.5H30.5V8.5H28.5V7.5H2.5V8.5H0.5Z" fill="#9aa1ad"/>
<rect x="2.8" y="6.8" width="25" height="17.2" rx="1.8" fill="url(#gfold)" stroke="#3b4fb5" stroke-width="1.6"/>
<path d="M3 22.5H28" stroke="#2a44c0" stroke-width="1.6"/></svg>
<div class="t" style="left:92px;top:1016.4px;font-size:22px;line-height:34px;color:#d9d9d9;letter-spacing:0.6px">SplunkToSplitEvents</div>
<svg class="a" style="left:56px;top:1016px" width="31" height="25" viewBox="0 0 31 25">
<rect x="10" y="0.8" width="11" height="6" rx="2" fill="#dfe6ee" stroke="#8d96a6" stroke-width="1.5"/>
<rect x="10.5" y="5" width="10" height="2.5" fill="#f2c35c"/>
<path d="M0.5 6.5H30.5V8.5H28.5V7.5H2.5V8.5H0.5Z" fill="#9aa1ad"/>
<rect x="2.8" y="6.8" width="25" height="17.2" rx="1.8" fill="url(#gfold)" stroke="#3b4fb5" stroke-width="1.6"/>
<path d="M3 22.5H28" stroke="#2a44c0" stroke-width="1.6"/></svg>
<div class="a" style="left:18px;top:1050px;width:580px;height:32px;background:#0665de"></div>
<div class="t" style="left:93px;top:1050.4px;font-size:22px;line-height:34px;color:#ffffff;letter-spacing:0.6px">WebhookConsumer</div>
<svg class="a" style="left:56px;top:1050px" width="34" height="34" viewBox="0 0 34 34">
<path d="M4 10 H22 V22 H4Z" fill="#fdebb5"/>
<path d="M2 30 L10 19 H33 L26 30Z" fill="#ade0ff" stroke="#4848a8" stroke-width="1.8"/>
<rect x="0" y="0" width="14" height="12" fill="#fff"/>
<path d="M2.5 10V2.5H5L7 5.5L9 2.5H11.5V10H9.5V6L7 9L4.5 6V10Z" fill="#1f5fa8"/>
<path d="M25 0 V12 Q25 16 21 16 Q18 16 17 14" stroke="#fff" stroke-width="5" fill="none"/>
<path d="M25 0 V12 Q25 16 21 16 Q18 16 17 14" stroke="#1f5fa8" stroke-width="2.2" fill="none"/></svg><svg class="a" style="left:56px;top:1066px" width="15" height="17" viewBox="0 0 15 17">
<path d="M5.2 1 H9.8 L14.2 13.5 Q14.8 16.3 12 16.3 H3 Q0.2 16.3 0.8 13.5 Z" fill="#f7d88a" stroke="#d8901e" stroke-width="1.5"/>
<rect x="6.4" y="4.5" width="2.2" height="7" fill="#3a1800"/><rect x="6.4" y="12.6" width="2.2" height="2.2" fill="#3a1800"/></svg>
<svg class="a" style="left:33px;top:1050px" width="18" height="34" viewBox="0 0 18 34"><path d="M0 8H18L9 22Z" fill="#8f8f8f"/></svg>
<div class="t" style="left:124px;top:1084.4px;font-size:22px;line-height:34px;color:#d9d9d9;letter-spacing:0.6px">bin</div>
<svg class="a" style="left:90px;top:1090px" width="32" height="24" viewBox="0 0 32 24">
<path d="M2 3.5 Q2 1 4.5 1 H13 Q15 1 15 3.5 V5 H24 Q26 5 26 7 V10 H3.5 L1 22 Z" fill="url(#gorange)" stroke="#b8742a" stroke-width="1.8"/>
<rect x="4" y="2.5" width="9" height="2.5" fill="#fff8e0"/>
<path d="M1.2 22.5 L6.5 11 H30.5 L25 22.5 Z" fill="url(#gorange)" stroke="#b8742a" stroke-width="1.8"/></svg>
<div class="t" style="left:124px;top:1118.4px;font-size:22px;line-height:34px;color:#d9d9d9;letter-spacing:0.6px">src</div>
<svg class="a" style="left:89px;top:1124px" width="32" height="24" viewBox="0 0 32 24">
<path d="M2 3.5 Q2 1 4.5 1 H13 Q15 1 15 3.5 V5 H24 Q26 5 26 7 V10 H3.5 L1 22 Z" fill="url(#gorange)" stroke="#b8742a" stroke-width="1.8"/>
<rect x="4" y="2.5" width="9" height="2.5" fill="#fff8e0"/>
<path d="M1.2 22.5 L6.5 11 H30.5 L25 22.5 Z" fill="url(#gorange)" stroke="#b8742a" stroke-width="1.8"/></svg><svg class="a" style="left:88px;top:1133px" width="15" height="17" viewBox="0 0 15 17">
<path d="M5.2 1 H9.8 L14.2 13.5 Q14.8 16.3 12 16.3 H3 Q0.2 16.3 0.8 13.5 Z" fill="#f7d88a" stroke="#d8901e" stroke-width="1.5"/>
<rect x="6.4" y="4.5" width="2.2" height="7" fill="#3a1800"/><rect x="6.4" y="12.6" width="2.2" height="2.2" fill="#3a1800"/></svg>
<svg class="a" style="left:65px;top:1118px" width="18" height="34" viewBox="0 0 18 34"><path d="M0 8H18L9 22Z" fill="#8f8f8f"/></svg>
<div class="t" style="left:156px;top:1152.4px;font-size:22px;line-height:34px;color:#d9d9d9;letter-spacing:0.6px">splitsupport</div>
<svg class="a" style="left:121px;top:1158px" width="32" height="24" viewBox="0 0 32 24">
<path d="M2 3.5 Q2 1 4.5 1 H13 Q15 1 15 3.5 V5 H24 Q26 5 26 7 V10 H3.5 L1 22 Z" fill="url(#gorange)" stroke="#b8742a" stroke-width="1.8"/>
<rect x="4" y="2.5" width="9" height="2.5" fill="#fff8e0"/>
<path d="M1.2 22.5 L6.5 11 H30.5 L25 22.5 Z" fill="url(#gorange)" stroke="#b8742a" stroke-width="1.8"/></svg><svg class="a" style="left:120px;top:1167px" width="15" height="17" viewBox="0 0 15 17">
<path d="M5.2 1 H9.8 L14.2 13.5 Q14.8 16.3 12 16.3 H3 Q0.2 16.3 0.8 13.5 Z" fill="#f7d88a" stroke="#d8901e" stroke-width="1.5"/>
<rect x="6.4" y="4.5" width="2.2" height="7" fill="#3a1800"/><rect x="6.4" y="12.6" width="2.2" height="2.2" fill="#3a1800"/></svg>
<svg class="a" style="left:97px;top:1152px" width="18" height="34" viewBox="0 0 18 34"><path d="M0 8H18L9 22Z" fill="#8f8f8f"/></svg>
<div class="t" style="left:188px;top:1186.4px;font-size:22px;line-height:34px;color:#d9d9d9;letter-spacing:0.6px">WebhookConsumer.java</div>
<svg class="a" style="left:158px;top:1188px" width="23" height="28" viewBox="0 0 23 28">
<path d="M1 1H15L22 8V27H1Z" fill="#eef4fc" stroke="#b09a50" stroke-width="1.6"/>
<path d="M15 1V8H22" fill="#e4d8a8" stroke="#b09a50" stroke-width="1.2"/>
<path d="M12.5 6 V18 Q12.5 23 8 23 Q5 23 4 21" stroke="#2f6fb8" stroke-width="3.2" fill="none"/></svg><svg class="a" style="left:152px;top:1202px" width="15" height="17" viewBox="0 0 15 17">
<path d="M5.2 1 H9.8 L14.2 13.5 Q14.8 16.3 12 16.3 H3 Q0.2 16.3 0.8 13.5 Z" fill="#f7d88a" stroke="#d8901e" stroke-width="1.5"/>
<rect x="6.4" y="4.5" width="2.2" height="7" fill="#3a1800"/><rect x="6.4" y="12.6" width="2.2" height="2.2" fill="#3a1800"/></svg>
<div class="t" style="left:124px;top:1220.4px;font-size:22px;line-height:34px;color:#d9d9d9;letter-spacing:0.6px">target</div>
<svg class="a" style="left:90px;top:1226px" width="32" height="24" viewBox="0 0 32 24">
<path d="M2 3.5 Q2 1 4.5 1 H13 Q15 1 15 3.5 V5 H24 Q26 5 26 7 V10 H3.5 L1 22 Z" fill="url(#gorange)" stroke="#b8742a" stroke-width="1.8"/>
<rect x="4" y="2.5" width="9" height="2.5" fill="#fff8e0"/>
<path d="M1.2 22.5 L6.5 11 H30.5 L25 22.5 Z" fill="url(#gorange)" stroke="#b8742a" stroke-width="1.8"/></svg>
<svg class="a" style="left:67px;top:1226px" width="16" height="17" viewBox="0 0 16 17"><path d="M0.5 0.5V16.5L15.5 8.5Z" fill="#8f8f8f"/></svg>
<div class="t" style="left:124px;top:1254.4px;font-size:22px;line-height:34px;color:#d9d9d9;letter-spacing:0.6px">LSDK.jar</div>
<svg class="a" style="left:88px;top:1254px" width="34" height="34" viewBox="0 0 34 34">
<path d="M2 20 L16 33 L30 20 L22 14 H10 Z" fill="#8ea6d8"/>
<path d="M6 20 L16 29 L26 20" fill="#a8bde6"/>
<ellipse cx="11.5" cy="11" rx="9" ry="3.5" fill="#cfcfcf"/>
<path d="M2.5 11 Q3 20 11.5 21 Q20 20 20.5 11Z" fill="#ededed"/>
<ellipse cx="11.5" cy="11" rx="7" ry="2.4" fill="#2a1a0a"/>
<path d="M20 24 L30 3" stroke="#d8c04a" stroke-width="2.2" stroke-dasharray="3 1"/></svg>
<div class="t" style="left:124px;top:1288.4px;font-size:22px;line-height:34px;color:#d9d9d9;letter-spacing:0.6px">pom.xml</div>
<svg class="a" style="left:94px;top:1290px" width="23" height="29" viewBox="0 0 23 29">
<path d="M1 1H16L22 7V28H1Z" fill="#f6f8fc" stroke="#c39a2a" stroke-width="1.8"/>
<path d="M16 1V7H22Z" fill="#e6c67a"/>
<path d="M4 23V12H7.5L11.5 17L15.5 12H19V23H16V16.5L11.5 21L7 16.5V23Z" fill="#1f5fa8"/></svg>
<div class="t" style="left:124px;top:1322.4px;font-size:22px;line-height:34px;color:#d9d9d9;letter-spacing:0.6px">postgresql-42.2.5.jar</div>
<svg class="a" style="left:88px;top:1322px" width="34" height="34" viewBox="0 0 34 34">
<path d="M2 20 L16 33 L30 20 L22 14 H10 Z" fill="#8ea6d8"/>
<path d="M6 20 L16 29 L26 20" fill="#a8bde6"/>
<ellipse cx="11.5" cy="11" rx="9" ry="3.5" fill="#cfcfcf"/>
<path d="M2.5 11 Q3 20 11.5 21 Q20 20 20.5 11Z" fill="#ededed"/>
<ellipse cx="11.5" cy="11" rx="7" ry="2.4" fill="#2a1a0a"/>
<path d="M20 24 L30 3" stroke="#d8c04a" stroke-width="2.2" stroke-dasharray="3 1"/></svg>
<div class="t" style="left:92px;top:1356.4px;font-size:22px;line-height:34px;color:#d9d9d9;letter-spacing:0.6px">Zendesk-GIT-Sync</div>
<svg class="a" style="left:56px;top:1356px" width="31" height="25" viewBox="0 0 31 25">
<rect x="10" y="0.8" width="11" height="6" rx="2" fill="#dfe6ee" stroke="#8d96a6" stroke-width="1.5"/>
<rect x="10.5" y="5" width="10" height="2.5" fill="#f2c35c"/>
<path d="M0.5 6.5H30.5V8.5H28.5V7.5H2.5V8.5H0.5Z" fill="#9aa1ad"/>
<rect x="2.8" y="6.8" width="25" height="17.2" rx="1.8" fill="url(#gfold)" stroke="#3b4fb5" stroke-width="1.6"/>
<path d="M3 22.5H28" stroke="#2a44c0" stroke-width="1.6"/></svg>
<div class="t" style="left:92px;top:1390.4px;font-size:22px;line-height:34px;color:#d9d9d9;letter-spacing:0.6px">Zendesk-JIRA</div>
<svg class="a" style="left:56px;top:1390px" width="31" height="25" viewBox="0 0 31 25">
<rect x="10" y="0.8" width="11" height="6" rx="2" fill="#dfe6ee" stroke="#8d96a6" stroke-width="1.5"/>
<rect x="10.5" y="5" width="10" height="2.5" fill="#f2c35c"/>
<path d="M0.5 6.5H30.5V8.5H28.5V7.5H2.5V8.5H0.5Z" fill="#9aa1ad"/>
<rect x="2.8" y="6.8" width="25" height="17.2" rx="1.8" fill="url(#gfold)" stroke="#3b4fb5" stroke-width="1.6"/>
<path d="M3 22.5H28" stroke="#2a44c0" stroke-width="1.6"/></svg></div>
<div class="a" style="left:614px;top:114px;width:1392px;height:8px;background:#2f3337;border-top:1.5px solid #363b3f"></div>
<div class="a" style="left:614px;top:66px;width:350px;height:56px;background:#33373b;border-radius:10px 10px 0 0"></div>
<div class="t" style="left:662px;top:75px;font-size:22px;line-height:34px;color:#f4f4f4;letter-spacing:0.58px">WebhookConsumer.java</div>
<div class="t" style="left:1011px;top:75px;font-size:22px;line-height:34px;color:#b4b4b4;letter-spacing:0.77px">WebhookConsumer/pom.xml</div>
<div class="a" style="left:614px;top:122px;width:1392px;height:864px;background:#33373b;border-radius:0 0 0 10px"></div>
<div class="a" style="left:618px;top:122px;width:1388px;height:860px;background:#2f2f2f;overflow:hidden" id="ed"></div>
<div class="a" style="left:618px;top:122px;width:1388px;height:860px;overflow:hidden"><div class="a" style="left:-618px;top:-122px;width:2006px;height:1000px">
<div class="a" style="left:618px;top:122px;width:24px;height:860px;background:#262626"></div>
<div class="a" style="left:704px;top:122px;width:2px;height:860px;background:#282828"></div>
<div class="ln" style="left:641.71px;top:116.20px">128</div>
<div class="code" style="left:768.72px;top:144.20px"><span class="br">}</span></div>
<div class="ln" style="left:641.71px;top:144.20px">129</div>
<div class="ln" style="left:641.71px;top:172.20px">130</div>
<div class="code" style="left:768.72px;top:200.20px"><span class="kw">public</span><span class="op"> </span><span class="kw">static</span><span class="op"> </span><span class="if">List</span><span class="op">&lt;</span><span class="if">Map</span><span class="op">&lt;</span><span class="ta">String</span><span class="op"> , </span><span class="ta">String</span><span class="op">&gt;&gt; </span><span class="md">StringToHash</span><span class="br">(</span><span class="cl">String</span><span class="op"> </span><span class="pa">decomp</span><span class="br">)</span><span class="op"> </span><span class="br">{</span></div>
<div class="ln" style="left:641.71px;top:200.20px">131</div>
<div class="code" style="left:869.73px;top:228.20px"><span class="if">List</span><span class="op">&lt;</span><span class="if">Map</span><span class="op">&lt;</span><span class="ta">String</span><span class="op"> , </span><span class="ta">String</span><span class="op">&gt;&gt; </span><span class="ld">arrayRecord</span><span class="op">  = </span><span class="kw">new</span><span class="op"> </span><span class="me">ArrayList</span><span class="op">&lt;</span><span class="if">Map</span><span class="op">&lt;</span><span class="ta">String</span><span class="op">,</span><span class="ta">String</span><span class="op">&gt;&gt;</span><span class="br">();</span></div>
<div class="ln" style="left:641.71px;top:228.20px">132</div>
<div class="code" style="left:869.73px;top:256.20px"><span class="kw">if</span><span class="op"> </span><span class="br">(</span><span class="pa">decomp</span><span class="op">.</span><span class="me">contains</span><span class="br">(</span><span class="st">&quot;}, {&quot;</span><span class="br">))</span><span class="op"> </span><span class="br">{</span></div>
<div class="ln" style="left:641.71px;top:256.20px">133</div>
<div class="code" style="left:927.45px;top:284.20px"><span class="kw">for</span><span class="br">(</span><span class="kw">final</span><span class="op"> </span><span class="cl">String</span><span class="op"> </span><span class="ld">entry</span><span class="op"> : </span><span class="pa">decomp</span><span class="op">.</span><span class="me">split</span><span class="br">(</span><span class="st">&quot;},&quot;</span><span class="br">))</span><span class="op"> </span><span class="br">{</span></div>
<div class="ln" style="left:641.71px;top:284.20px">134</div>
<div class="code" style="left:985.17px;top:312.20px"><span class="if">Map</span><span class="op">&lt;</span><span class="ta">String</span><span class="op">,</span><span class="ta">String</span><span class="op">&gt; </span><span class="ld">oneRecord</span><span class="op"> = </span><span class="kw">new</span><span class="op"> </span><span class="me">HashMap</span><span class="op">&lt;</span><span class="ta">String</span><span class="op">, </span><span class="ta">String</span><span class="op">&gt;</span><span class="br">();</span></div>
<div class="ln" style="left:641.71px;top:312.20px">135</div>
<div class="code" style="left:999.60px;top:340.20px"><span class="kw">for</span><span class="br">(</span><span class="kw">final</span><span class="op"> </span><span class="cl">String</span><span class="op"> </span><span class="ld">parts</span><span class="op"> : </span><span class="lv">entry</span><span class="op">.</span><span class="me">split</span><span class="br">(</span><span class="st">&quot;,&quot;</span><span class="br">))</span><span class="op"> </span><span class="br">{</span></div>
<div class="ln" style="left:641.71px;top:340.20px">136</div>
<div class="code" style="left:1057.32px;top:368.20px"><span class="kw">final</span><span class="op"> </span><span class="cl">String</span><span class="op">[] </span><span class="ld">record</span><span class="op"> = </span><span class="lv">parts</span><span class="op">.</span><span class="me">split</span><span class="br">(</span><span class="st">&quot;=&quot;</span><span class="br">);</span></div>
<div class="ln" style="left:641.71px;top:368.20px">137</div>
<div class="code" style="left:1057.32px;top:396.20px"><span class="cl">String</span><span class="op"> </span><span class="ld">recordOne</span><span class="op"> = </span><span class="lv">record</span><span class="op">[</span><span class="nu">0</span><span class="op">].</span><span class="me">replace</span><span class="br">(</span><span class="st">&quot;[{&quot;</span><span class="op">, </span><span class="st">&quot;&quot;</span><span class="br">);</span></div>
<div class="ln" style="left:641.71px;top:396.20px">138</div>
<div class="code" style="left:1057.32px;top:424.20px"><span class="lv">recordOne</span><span class="op"> = </span><span class="lv">recordOne</span><span class="op">.</span><span class="me">replace</span><span class="br">(</span><span class="st">&quot;{&quot;</span><span class="op">, </span><span class="st">&quot;&quot;</span><span class="br">);</span></div>
<div class="ln" style="left:641.71px;top:424.20px">139</div>
<div class="code" style="left:1057.32px;top:452.20px"><span class="cl">String</span><span class="op"> </span><span class="ld">recordTwo</span><span class="op"> = </span><span class="lv">record</span><span class="op">[</span><span class="nu">1</span><span class="op">].</span><span class="me">replace</span><span class="br">(</span><span class="st">&quot;}]&quot;</span><span class="op">, </span><span class="st">&quot;&quot;</span><span class="br">);</span></div>
<div class="ln" style="left:641.71px;top:452.20px">140</div>
<div class="code" style="left:1057.32px;top:480.20px"><span class="lv">oneRecord</span><span class="op">.</span><span class="am">put</span><span class="br">(</span><span class="lv">recordOne</span><span class="op">.</span><span class="me">trim</span><span class="br">()</span><span class="op">, </span><span class="lv">recordTwo</span><span class="op">.</span><span class="me">trim</span><span class="br">());</span></div>
<div class="ln" style="left:641.71px;top:480.20px">141</div>
<div class="code" style="left:999.60px;top:508.20px"><span class="br">}</span></div>
<div class="ln" style="left:641.71px;top:508.20px">142</div>
<div class="code" style="left:999.60px;top:536.20px"><span class="lv">arrayRecord</span><span class="op">.</span><span class="am">add</span><span class="br">(</span><span class="lv">oneRecord</span><span class="br">);</span></div>
<div class="ln" style="left:641.71px;top:536.20px">143</div>
<div class="code" style="left:898.59px;top:564.20px"><span class="br">}</span></div>
<div class="ln" style="left:641.71px;top:564.20px">144</div>
<div class="code" style="left:840.87px;top:592.20px"><span class="br">}</span><span class="op"> </span><span class="kw">else</span><span class="op"> </span><span class="br">{</span></div>
<div class="ln" style="left:641.71px;top:592.20px">145</div>
<div class="code" style="left:869.73px;top:620.20px"><span class="if">Map</span><span class="op">&lt;</span><span class="ta">String</span><span class="op">,</span><span class="ta">String</span><span class="op">&gt; </span><span class="ld">oneRecord</span><span class="op"> = </span><span class="kw">new</span><span class="op"> </span><span class="me">HashMap</span><span class="op">&lt;</span><span class="ta">String</span><span class="op">, </span><span class="ta">String</span><span class="op">&gt;</span><span class="br">();</span></div>
<div class="ln" style="left:641.71px;top:620.20px">146</div>
<div class="code" style="left:884.16px;top:648.20px"><span class="kw">for</span><span class="br">(</span><span class="kw">final</span><span class="op"> </span><span class="cl">String</span><span class="op"> </span><span class="ld">parts</span><span class="op"> : </span><span class="pa">decomp</span><span class="op">.</span><span class="me">split</span><span class="br">(</span><span class="st">&quot;,&quot;</span><span class="br">))</span><span class="op"> </span><span class="br">{</span></div>
<div class="ln" style="left:641.71px;top:648.20px">147</div>
<div class="code" style="left:941.88px;top:676.20px"><span class="kw">final</span><span class="op"> </span><span class="cl">String</span><span class="op">[] </span><span class="ld">record</span><span class="op"> = </span><span class="lv">parts</span><span class="op">.</span><span class="me">split</span><span class="br">(</span><span class="st">&quot;=&quot;</span><span class="br">);</span></div>
<div class="ln" style="left:641.71px;top:676.20px">148</div>
<div class="code" style="left:941.88px;top:704.20px"><span class="cl">String</span><span class="op"> </span><span class="ld">recordOne</span><span class="op"> = </span><span class="lv">record</span><span class="op">[</span><span class="nu">0</span><span class="op">].</span><span class="me">replace</span><span class="br">(</span><span class="st">&quot;[{&quot;</span><span class="op">, </span><span class="st">&quot;&quot;</span><span class="br">);</span></div>
<div class="ln" style="left:641.71px;top:704.20px">149</div>
<div class="code" style="left:941.88px;top:732.20px"><span class="cl">String</span><span class="op"> </span><span class="ld">recordTwo</span><span class="op"> = </span><span class="lv">record</span><span class="op">[</span><span class="nu">1</span><span class="op">].</span><span class="me">replace</span><span class="br">(</span><span class="st">&quot;}]&quot;</span><span class="op">, </span><span class="st">&quot;&quot;</span><span class="br">);</span></div>
<div class="ln" style="left:641.71px;top:732.20px">150</div>
<div class="code" style="left:941.88px;top:760.20px"><span class="lv">oneRecord</span><span class="op">.</span><span class="am">put</span><span class="br">(</span><span class="lv">recordOne</span><span class="op">.</span><span class="me">trim</span><span class="br">()</span><span class="op">, </span><span class="lv">recordTwo</span><span class="op">.</span><span class="me">trim</span><span class="br">());</span></div>
<div class="ln" style="left:641.71px;top:760.20px">151</div>
<div class="code" style="left:884.16px;top:788.20px"><span class="br">}</span></div>
<div class="ln" style="left:641.71px;top:788.20px">152</div>
<div class="code" style="left:884.16px;top:816.20px"><span class="lv">arrayRecord</span><span class="op">.</span><span class="am">add</span><span class="br">(</span><span class="lv">oneRecord</span><span class="br">);</span></div>
<div class="ln" style="left:641.71px;top:816.20px">153</div>
<div class="code" style="left:840.87px;top:844.20px"><span class="br">}</span></div>
<div class="ln" style="left:641.71px;top:844.20px">154</div>
<div class="code" style="left:840.87px;top:872.20px"><span class="kw">return</span><span class="op"> </span><span class="lv">arrayRecord</span><span class="br">;</span></div>
<div class="ln" style="left:641.71px;top:872.20px">155</div>
<div class="code" style="left:768.72px;top:900.20px"><span class="br">}</span></div>
<div class="ln" style="left:641.71px;top:900.20px">156</div>
<div class="code" style="left:711.00px;top:928.20px"><span class="br">}</span></div>
<div class="ln" style="left:641.71px;top:928.20px">157</div>
<div class="ln" style="left:641.71px;top:956.20px">158</div>
</div></div>
<div class="a" style="left:614px;top:986px;width:1392px;height:61px;background:linear-gradient(#53585c,#4f5356 35%,#47484b)"></div>
<div class="a" style="left:614px;top:998px;width:183px;height:55px;background:#33373b;border-radius:10px 10px 0 0"></div>
<div class="a" style="left:614px;top:1047px;width:1392px;height:803px;background:#2f3337;border-top:1.5px solid #363b3f"></div>
<div class="a" style="left:614px;top:1047px;width:183px;height:6px;background:#33373b"></div>
<div class="a" style="left:618px;top:1053px;width:1388px;height:797px;background:#2f2f2f"></div>
<div class="a" style="left:618px;top:1082px;width:1388px;height:1.5px;background:#282828"></div>
<div class="t" style="left:662px;top:1007px;font-size:22px;line-height:34px;color:#f4f4f4;letter-spacing:0.83px">Console</div>
<div class="t" style="left:845px;top:1007px;font-size:22px;line-height:34px;color:#ababab;letter-spacing:0.7px">Progress</div>
<div class="t" style="left:784px;top:1050px;font-size:22px;line-height:34px;color:#a9a9a9;letter-spacing:0.9px">display at this time.</div><div class="t" style="left:584px;width:200px;text-align:right;top:1050px;font-size:22px;line-height:34px;color:#a9a9a9;letter-spacing:0.9px">consoles to </div>
<svg class="a" style="left:29px;top:78px" width="20" height="27" viewBox="0 0 20 27">
<rect x="1" y="0" width="2" height="26" fill="#7b8190"/><rect x="3" y="6" width="6" height="2" fill="#7b8190"/><rect x="3" y="18" width="6" height="2" fill="#7b8190"/>
<rect x="9" y="2" width="10" height="10" fill="#c8782c"/><rect x="9" y="14" width="10" height="10" fill="#c8782c"/>
<rect x="11" y="4" width="2" height="2" fill="#ffefb0"/><rect x="15" y="4" width="2" height="2" fill="#ffefb0"/><rect x="11" y="8" width="2" height="2" fill="#ffefb0"/><rect x="15" y="8" width="2" height="2" fill="#ffefb0"/>
<rect x="11" y="16" width="2" height="2" fill="#ffefb0"/><rect x="15" y="16" width="2" height="2" fill="#ffefb0"/><rect x="11" y="20" width="2" height="2" fill="#ffefb0"/><rect x="15" y="20" width="2" height="2" fill="#ffefb0"/></svg>
<svg class="a" style="left:332px;top:82px" width="20" height="20" viewBox="0 0 20 20">
<path d="M3 3L17 17M17 3L3 17" stroke="#000" stroke-width="7.5" stroke-linecap="square"/>
<path d="M4 4L16 16M16 4L4 16" stroke="#fff" stroke-width="3.6" stroke-linecap="square"/></svg>
<svg class="a" style="left:928px;top:82px" width="20" height="20" viewBox="0 0 20 20">
<path d="M3 3L17 17M17 3L3 17" stroke="#000" stroke-width="7.5" stroke-linecap="square"/>
<path d="M4 4L16 16M16 4L4 16" stroke="#fff" stroke-width="3.6" stroke-linecap="square"/></svg>
<svg class="a" style="left:762px;top:1014px" width="20" height="20" viewBox="0 0 20 20">
<path d="M3 3L17 17M17 3L3 17" stroke="#000" stroke-width="7.5" stroke-linecap="square"/>
<path d="M4 4L16 16M16 4L4 16" stroke="#fff" stroke-width="3.6" stroke-linecap="square"/></svg>
<div class="a" style="left:512px;top:80px;width:20px;height:8px;background:#fff;border:1.5px solid #000"></div>
<svg class="a" style="left:556px;top:80px" width="20" height="20" viewBox="0 0 20 20"><rect x="0" y="0" width="20" height="20" fill="#000"/><rect x="1.6" y="1.6" width="16.8" height="1.8" fill="#fff"/><rect x="1.6" y="5" width="16.8" height="13.4" fill="#fff"/></svg>
<svg class="a" style="left:358px;top:132px" width="27" height="27" viewBox="0 0 27 27">
<rect x="0.8" y="0.8" width="20" height="20" fill="#d8ecff" stroke="#a8b8d0" stroke-width="1.6"/>
<rect x="4.8" y="4.8" width="21" height="21" fill="url(#gwin)" stroke="#8c98b0" stroke-width="1.6"/>
<rect x="8" y="13.5" width="14" height="2.2" fill="#0a2a6a"/></svg>
<svg class="a" style="left:398px;top:127px" width="34" height="34" viewBox="0 0 34 34">
<path d="M1 10L10 1.5V7.5H24.5V12.5H10V18.5Z" fill="url(#gorange)" stroke="#c58a10" stroke-width="1.6" stroke-linejoin="round"/>
<path d="M32.5 24L23.5 15.5V21.5H8V26.5H23.5V32.5Z" fill="url(#gorange)" stroke="#c58a10" stroke-width="1.6" stroke-linejoin="round"/></svg>
<svg class="a" style="left:458px;top:131px" width="28" height="28" viewBox="0 0 28 28">
<circle cx="8" cy="8" r="7" fill="url(#ggray)"/><circle cx="19" cy="11" r="7" fill="url(#ggray)"/><circle cx="9" cy="20" r="7" fill="url(#gpurple)"/></svg>
<svg class="a" style="left:498px;top:130px" width="34" height="31" viewBox="0 0 34 31">
<path d="M0 5H12M0 25H12" stroke="#5aa0d8" stroke-width="2"/>
<path d="M12 0V10M20 0V10M12 20V30M20 20V30M6 5H14M6 25H14" stroke="#7a8aa0" stroke-width="2"/>
<path d="M8 14H25V9L33 15L25 21V16H8Z" fill="url(#gorange)" stroke="#c58a10" stroke-width="1.4"/></svg>
<svg class="a" style="left:560px;top:134px" width="20" height="11" viewBox="0 0 20 11"><path d="M1 1H19L10 10Z" fill="#fff" stroke="#000" stroke-width="2"/></svg>
<svg class="a" style="left:628px;top:78px" width="23" height="28" viewBox="0 0 23 28">
<path d="M1 1H15L22 8V27H1Z" fill="#eef4fc" stroke="#b8962a" stroke-width="1.8"/>
<path d="M15 1V8H22Z" fill="#e0c078"/>
<path d="M12 6 V19 Q12 24 7 24 Q5 24 4.5 23" stroke="#2f6aa8" stroke-width="3.4" fill="none"/></svg>
<svg class="a" style="left:622px;top:91px" width="15" height="17" viewBox="0 0 15 17">
<path d="M5.2 1 H9.8 L14.2 13.5 Q14.8 16.3 12 16.3 H3 Q0.2 16.3 0.8 13.5 Z" fill="#f7d88a" stroke="#d8901e" stroke-width="1.5"/>
<rect x="6.4" y="4.5" width="2.2" height="7" fill="#3a1800"/><rect x="6.4" y="12.6" width="2.2" height="2.2" fill="#3a1800"/></svg>
<svg class="a" style="left:978px;top:78px" width="23" height="29" viewBox="0 0 23 29">
<path d="M1 1H16L22 7V28H1Z" fill="#f6f8fc" stroke="#c39a2a" stroke-width="1.8"/>
<path d="M16 1V7H22Z" fill="#e6c67a"/>
<path d="M4 23V12H7.5L11.5 17L15.5 12H19V23H16V16.5L11.5 21L7 16.5V23Z" fill="#1f5fa8"/></svg>
<svg class="a" style="left:686px;top:202px" width="19" height="19" viewBox="0 0 19 19">
<circle cx="9.5" cy="9.5" r="9" fill="#a9adb5"/><circle cx="9.5" cy="8.5" r="7" fill="#c2c5cc"/>
<rect x="4" y="8.5" width="11" height="2.2" fill="#4a5a80"/></svg>
<svg class="a" style="left:626px;top:1010px" width="26" height="27" viewBox="0 0 26 27">
<rect x="0.5" y="0.5" width="25" height="21" rx="2" fill="#3f7fd0" stroke="#2f63b0"/>
<rect x="2" y="2.5" width="22" height="17" fill="#7c8698"/>
<rect x="3.5" y="4" width="18.5" height="14" fill="#fff"/><rect x="3.5" y="4" width="2" height="14" fill="#cbeeff"/>
<rect x="6" y="8" width="9.5" height="1.8" fill="#2a3f8a"/><rect x="6" y="12" width="14" height="1.8" fill="#2a3f8a"/>
<rect x="7" y="22" width="12" height="2" fill="#2f63b0"/><rect x="1" y="23.5" width="24" height="2.6" fill="#2f63b0"/></svg>
<svg class="a" style="left:810px;top:1016px" width="30" height="26" viewBox="0 0 30 26">
<rect x="0.8" y="0.8" width="27" height="14" fill="#cfe8f4" stroke="#a08a70" stroke-width="1.6"/>
<rect x="2" y="2" width="14" height="12" fill="#4aa84a"/><rect x="2" y="5" width="12" height="2.5" fill="#eaf6ea"/>
<circle cx="20.5" cy="17" r="7.5" fill="url(#ggreen)" stroke="#1e6e2a" stroke-width="1.2"/>
<path d="M18 12.5L25 17L18 21.5Z" fill="#fff"/></svg>
<div class="a" id="menu" style="left:256px;top:1060px;width:528px;height:800px;border-radius:10px 10px 0 0;background:radial-gradient(ellipse 480px 300px at 0 0,rgba(160,174,194,1) 0%,rgba(166,173,184,0.8) 40%,rgba(170,171,173,0) 80%),linear-gradient(#ababab,#a9a9a9 40%,#a5a5a5);overflow:hidden">
<div class="a" style="left:0;top:418px;width:528px;height:41.5px;background:#055fd1"></div>
<div class="sep" style="top:94.0px"></div>
<div class="sep" style="top:362.6px"></div>
<div class="sep" style="top:470.2px"></div>
<div class="sep" style="top:612.0px"></div>
<div class="mi" style="left:43px;top:7.1px;color:#000000">New</div>
<svg class="a" style="left:486px;top:16.3px" width="18" height="20"><path d="M0 0L18 10L0 20Z" fill="#000"/></svg>
<div class="mi" style="left:43px;top:45.2px;color:#000000">Go Into</div>
<div class="mi" style="left:82px;top:109.3px;color:#000000">Copy</div>
<svg class="a" style="left:44px;top:114.5px" width="30" height="31" viewBox="0 0 30 31">
<path d="M0.8 0.8H15V25H0.8Z" fill="#eef4f8" stroke="#a89060" stroke-width="1.6"/>
<path d="M3.5 6H5M3.5 10H5M3.5 14H5M3.5 18H5M3.5 22H5" stroke="#5a7ab0" stroke-width="1.6"/>
<path d="M6.8 2.5H22L28 8.5V28.8H6.8Z" fill="#f2f6fa" stroke="#a89060" stroke-width="1.6"/>
<path d="M22 2.5V8.5H28Z" fill="#e6cc80"/>
<path d="M10 7.5H18M10 11.5H24M10 15.5H24M10 19.5H24M10 23.5H20" stroke="#5a7ab0" stroke-width="1.8"/></svg>
<div class="mi" style="left:82px;top:150.6px;color:#000000">Paste</div>
<svg class="a" style="left:46px;top:156.79999999999995px" width="28" height="31" viewBox="0 0 28 31">
<rect x="0.8" y="4.5" width="23" height="25" rx="2" fill="url(#gorange)" stroke="#c08840" stroke-width="1.6"/>
<path d="M5 7 Q6 1 12 1 Q18 1 19 7Z" fill="#6a86b8"/>
<path d="M10.5 10.5H21L26 15.5V29.5H10.5Z" fill="#eef4f8" stroke="#8a8f90" stroke-width="1.6"/>
<path d="M21 10.5V15.5H26Z" fill="#e6cc80"/>
<path d="M14 14.5H18M14 19H23M14 23H23" stroke="#5a7ab0" stroke-width="1.8"/></svg>
<div class="mi" style="left:82px;top:192.8px;color:#000000">Delete</div>
<svg class="a" style="left:46px;top:200.0px" width="27" height="27" viewBox="0 0 27 27">
<path d="M5 5L22 22M22 5L5 22" stroke="#c82a32" stroke-width="8.5" stroke-linecap="round"/>
<path d="M5 5L22 22M22 5L5 22" stroke="#ee5a60" stroke-width="5.5" stroke-linecap="round"/>
<path d="M6 5.5L13.5 13M21 5.5L13.5 13" stroke="#f7a0a2" stroke-width="2" stroke-linecap="round"/></svg>
<div class="mi" style="left:43px;top:233.1px;color:#000000">Move...</div>
<div class="mi" style="left:43px;top:271.0px;color:#000000">Rename...</div>
<div class="mi" style="left:82px;top:310.9px;color:#6f6f6f">Remove from Context</div>
<svg class="a" style="left:46px;top:320.0999999999999px" width="30" height="22" viewBox="0 0 30 22">
<path d="M6 1H12V3H14V5H16V8H18V11H16V14H14V16H12V18H9V16H8V13H10V10H9V8H7V5H6Z" fill="#dcc89a" stroke="#c6a56a" stroke-width="1"/>
<rect x="13" y="9" width="3" height="3" fill="#f4f0e6"/>
<path d="M0 20.5H10M18 20.5H28" stroke="#8b94a6" stroke-width="1.6"/></svg>
<svg class="a" style="left:406px;top:318.5999999999999px" width="100" height="26" viewBox="0 0 100 26">
<path d="M0 3H9L16.5 19.5H24M15.5 3H24" stroke="#6e6e6e" stroke-width="2.4" fill="none"/>
<path d="M42 1.5 L53 11 H47.5 V19.5 H36.5 V11 H31Z" stroke="#6e6e6e" stroke-width="2.2" fill="none" stroke-linejoin="miter"/>
<path d="M66 7H74V15H66Z M66 7V4.5A2.8 2.8 0 1 0 63.2 7H66 M74 7V4.5A2.8 2.8 0 1 1 76.8 7H74 M66 15V17.5A2.8 2.8 0 1 1 63.2 15H66 M74 15V17.5A2.8 2.8 0 1 0 76.8 15H74" stroke="#6e6e6e" stroke-width="2.2" fill="none"/>
<path d="M93 1.5V16" stroke="#6e6e6e" stroke-width="2.2"/><path d="M87 15H99L93 22Z" fill="#6e6e6e"/></svg>
<div class="mi" style="left:82px;top:377.2px;color:#000000">Import...</div>
<svg class="a" style="left:42px;top:385.4000000000001px" width="31" height="27" viewBox="0 0 31 27">
<path d="M1 9H6V20H25V9H30V25H1Z" fill="#d6e2f4" stroke="#5a78b0" stroke-width="1.4"/>
<path d="M4 1 L18 14" stroke="#4a9ad4" stroke-width="1.8"/>
<path d="M20 16 L13 16 L20 9Z" fill="#5aa0d0"/></svg>
<div class="mi" style="left:82px;top:419.2px;color:#ffffff">Export...</div>
<svg class="a" style="left:42px;top:426.9000000000001px" width="31" height="27" viewBox="0 0 31 27">
<path d="M1 11H6V20H25V11H30V25H1Z" fill="#d6e2f4" stroke="#5a78b0" stroke-width="1.4"/>
<path d="M9 17 L23 3" stroke="#7ab4dc" stroke-width="1.8"/>
<path d="M26 0 L26 8 L18 0Z" fill="#8ab8d8"/></svg>
<div class="mi" style="left:82px;top:485.4px;color:#000000">Refresh</div>
<svg class="a" style="left:44px;top:490.5999999999999px" width="29" height="28" viewBox="0 0 29 28">
<path d="M8 0.8H21L27.5 7.3V26.8H8Z" fill="#eef3fb" stroke="#c8b888" stroke-width="1.4"/>
<path d="M21 0.8V7.3H27.5Z" fill="#e6d290"/>
<path d="M2 11 Q2 5 9 4 L9 1 L14 6 L9 11 L9 8 Q6 8 6 11Z" fill="#f4c040" stroke="#c08010" stroke-width="1"/>
<path d="M12 15 Q12 22 5 23 L5 26 L0.5 21 L5 16 L5 19 Q8 19 8 15Z" fill="#f4c040" stroke="#c08010" stroke-width="1"/></svg>
<div class="mi" style="left:490px;top:490.1px;font-size:22px;line-height:34px">F5</div>
<div class="mi" style="left:43px;top:525.3px;color:#000000">Close Project</div>
<div class="mi" style="left:43px;top:562.5px;color:#6f6f6f">Close Unrelated Project</div>
<div class="mi" style="left:82px;top:627.3px;color:#000000">Search...</div>
<svg class="a" style="left:42px;top:632px" width="34" height="32" viewBox="0 0 34 32"><g transform="translate(17 16) rotate(-42)">
<path d="M-20 -3.5 L-9 -6 V6 L-20 3.5Z" fill="url(#gpentip)"/>
<rect x="-9" y="-6" width="7.5" height="12" fill="#c9c3cc" stroke="#9b7a48" stroke-width="1.3"/>
<path d="M-1.5 -6 H15 Q19 -6 19 -2 V2 Q19 6 15 6 H-1.5Z" fill="url(#gpen)"/>
<rect x="7" y="-2" width="4" height="2.6" rx="1" fill="#2a5aa8"/>
</g></svg>
<div class="mi" style="left:469px;top:627.3px">^ H</div>
<div class="mi" style="left:43px;top:667.2px;color:#000000">Validate</div>
<div class="mi" style="left:82px;top:707.0px;color:#000000">Coverage As</div>
<svg class="a" style="left:42px;top:710.7px" width="31" height="31" viewBox="0 0 31 31">
<circle cx="11" cy="11" r="10.2" fill="url(#ggreen)" stroke="#1e6e2a" stroke-width="1.5"/>
<path d="M7.5 3.5L17.5 11L7.5 18.5Z" fill="#fff"/>
<rect x="10" y="19" width="20" height="11" fill="#000"/>
<rect x="12" y="21" width="8" height="7" fill="#22c022"/><rect x="20" y="21" width="8" height="7" fill="#e02020"/></svg>
<svg class="a" style="left:486px;top:716.2px" width="18" height="20"><path d="M0 0L18 10L0 20Z" fill="#000"/></svg>
<div class="mi" style="left:82px;top:749.4px;color:#000000">Run As</div>
<svg class="a" style="left:44px;top:754.5999999999999px" width="29" height="29" viewBox="0 0 29 29">
<circle cx="14" cy="14" r="13" fill="url(#ggreen)" stroke="#1e6e2a" stroke-width="1.5"/>
<path d="M9.3 4.6L21.8 14L9.3 23.6Z" fill="#fff"/></svg>
<svg class="a" style="left:486px;top:758.6px" width="18" height="20"><path d="M0 0L18 10L0 20Z" fill="#000"/></svg>
</div>
</div></body></html>
